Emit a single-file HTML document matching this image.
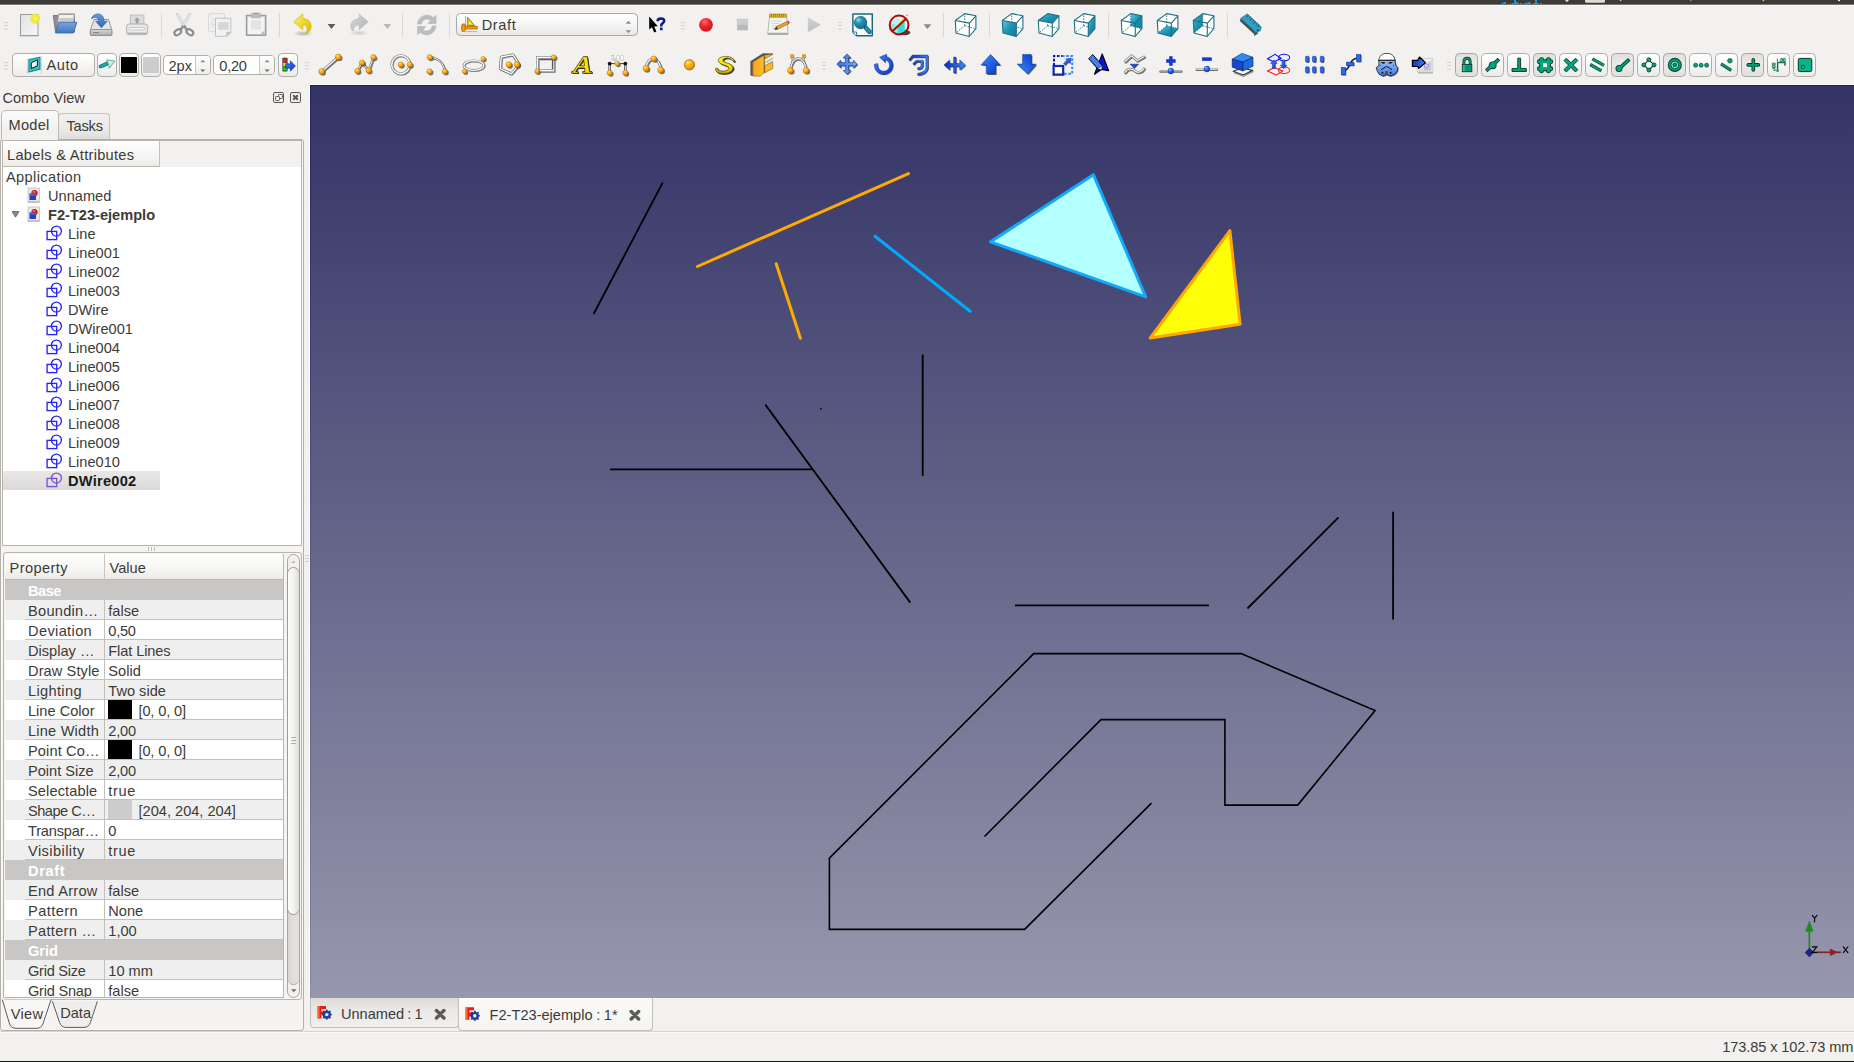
<!DOCTYPE html>
<html><head><meta charset="utf-8"><title>FreeCAD</title>
<style>
html,body{margin:0;padding:0;}
body{width:1854px;height:1062px;overflow:hidden;background:#f2f1f0;position:relative;
 font-family:"Liberation Sans",sans-serif;font-size:14.6px;color:#3c3b37;}
.abs{position:absolute;}
.t{position:absolute;white-space:nowrap;line-height:1;}
svg{position:absolute;overflow:visible;}
#topbar{left:0;top:0;width:1854px;height:4px;background:#3c3b37;}
#botline{left:0;top:1061px;width:1854px;height:1px;background:#1a1a18;}

</style></head>
<body>
<!-- toolbar1.html -->
<div class="abs" id="topbar"></div>
<div class="abs" style="left:0;top:4px;width:1854px;height:1px;background:#77766f;"></div><div class="abs" style="left:0;top:5px;width:1854px;height:1px;background:#fbfbfa;"></div>
<svg style="left:1480px;top:0" width="374" height="5" viewBox="1480 0 374 5"><g fill="#1b93dd" shape-rendering="crispEdges"><rect x="1501.6" y="3" width="4" height="1.2"/><rect x="1502.2" y="1.6" width="1.2" height="1.4"/><rect x="1504.4" y="1.6" width="1.2" height="1.4"/><rect x="1509.6" y="3" width="1.2" height="1"/><rect x="1511.8" y="3" width="7" height="1.2"/><rect x="1514" y="0" width="1.8" height="3"/><rect x="1516" y="1.8" width="1.6" height="1.2"/><rect x="1520" y="3" width="2" height="1"/><rect x="1524" y="3" width="7" height="1.2"/><rect x="1526" y="2" width="1.2" height="1"/><rect x="1528.4" y="2" width="1.2" height="1"/><rect x="1533" y="3" width="5.6" height="1.2"/><rect x="1535" y="0" width="1.6" height="3"/><rect x="1540.4" y="3" width="1.8" height="1"/></g><circle cx="1567" cy="0.2" r="1.5" fill="#e8e6e2"/><rect x="1585" y="-2" width="20" height="4.8" rx="1.6" fill="#dfdcd6"/><circle cx="1620.6" cy="0" r="0.9" fill="#e8e6e2"/><rect x="1690" y="0" width="1.4" height="1.4" fill="#8a8985"/><rect x="1762.6" y="0" width="1.6" height="1.2" fill="#f0c060"/><circle cx="1839" cy="0.2" r="1" fill="#ffffff"/></svg>
<div class="abs" style="left:4px;top:22px;width:4px;height:1px;background:#d6d4d0;box-shadow:0 3px 0 #d6d4d0,0 6.5px 0 #d6d4d0;"></div>
<div class="abs" style="left:681px;top:22px;width:4px;height:1px;background:#d6d4d0;box-shadow:0 3px 0 #d6d4d0,0 6.5px 0 #d6d4d0;"></div>
<div class="abs" style="left:838px;top:22px;width:4px;height:1px;background:#d6d4d0;box-shadow:0 3px 0 #d6d4d0,0 6.5px 0 #d6d4d0;"></div>
<div class="abs" style="left:161px;top:13px;width:1px;height:24px;background:#d9d7d3;"></div>
<div class="abs" style="left:279px;top:13px;width:1px;height:24px;background:#d9d7d3;"></div>
<div class="abs" style="left:402px;top:13px;width:1px;height:24px;background:#d9d7d3;"></div>
<div class="abs" style="left:449px;top:13px;width:1px;height:24px;background:#d9d7d3;"></div>
<div class="abs" style="left:943px;top:13px;width:1px;height:24px;background:#d9d7d3;"></div>
<div class="abs" style="left:989px;top:13px;width:1px;height:24px;background:#d9d7d3;"></div>
<div class="abs" style="left:1108px;top:13px;width:1px;height:24px;background:#d9d7d3;"></div>
<div class="abs" style="left:1227px;top:13px;width:1px;height:24px;background:#d9d7d3;"></div>
<div class="abs" style="left:456px;top:13px;width:182px;height:23px;box-sizing:border-box;border:1px solid #aba8a1;border-radius:4.5px;background:linear-gradient(#ffffff,#f6f5f4 50%,#e9e8e6);"></div>
<div class="t" style="left:481.7px;top:17.77px;font-size:14.6px;letter-spacing:0.6px;">Draft</div>
<svg style="left:0;top:0" width="1854" height="46" viewBox="0 0 1854 46"><defs>
<radialGradient id="gBall" cx="0.35" cy="0.3" r="0.75"><stop offset="0" stop-color="#ffe9a8"/><stop offset="0.25" stop-color="#ffc02e"/><stop offset="0.7" stop-color="#f59a00"/><stop offset="1" stop-color="#c87400"/></radialGradient>
<radialGradient id="gBlueBall" cx="0.35" cy="0.3" r="0.75"><stop offset="0" stop-color="#9cc4ff"/><stop offset="0.4" stop-color="#2a6cf0"/><stop offset="1" stop-color="#0a2fb0"/></radialGradient>
<radialGradient id="gRed" cx="0.4" cy="0.3" r="0.8"><stop offset="0" stop-color="#ff6a6a"/><stop offset="0.45" stop-color="#ee2028"/><stop offset="1" stop-color="#c8141c"/></radialGradient>
<radialGradient id="gYellow" cx="0.5" cy="0.5" r="0.5"><stop offset="0" stop-color="#fffde0"/><stop offset="0.25" stop-color="#f6ef3a"/><stop offset="0.8" stop-color="#eee733" stop-opacity="0.9"/><stop offset="1" stop-color="#eee733" stop-opacity="0"/></radialGradient>
<linearGradient id="gPage" x1="0" y1="0" x2="1" y2="1"><stop offset="0" stop-color="#e2e2e2"/><stop offset="1" stop-color="#f6f6f6"/></linearGradient>
<linearGradient id="gFolder" x1="0" y1="0" x2="0" y2="1"><stop offset="0" stop-color="#7aa5dc"/><stop offset="1" stop-color="#3f78c4"/></linearGradient>
<linearGradient id="gDrive" x1="0" y1="0" x2="0" y2="1"><stop offset="0" stop-color="#d8d8d8"/><stop offset="1" stop-color="#a9a9a9"/></linearGradient>
<linearGradient id="gSaveArrow" x1="0" y1="0" x2="0" y2="1"><stop offset="0" stop-color="#6a9bd8"/><stop offset="1" stop-color="#2d62b0"/></linearGradient>
<linearGradient id="gUndo" x1="0" y1="0" x2="1" y2="1"><stop offset="0" stop-color="#f8ee8a"/><stop offset="0.5" stop-color="#eed62c"/><stop offset="1" stop-color="#d8b800"/></linearGradient>
<linearGradient id="gRedo" x1="0" y1="0" x2="1" y2="1"><stop offset="0" stop-color="#d6d6d6"/><stop offset="1" stop-color="#b4b4b4"/></linearGradient>
<linearGradient id="gCube" x1="0" y1="0" x2="1" y2="1"><stop offset="0" stop-color="#62c8ea"/><stop offset="0.5" stop-color="#1b93b2"/><stop offset="1" stop-color="#0c7c98"/></linearGradient>
<linearGradient id="gBlue" x1="0" y1="0" x2="1" y2="1"><stop offset="0" stop-color="#3a8cff"/><stop offset="1" stop-color="#0a35c8"/></linearGradient>
<linearGradient id="gBlueH" x1="0" y1="0" x2="1" y2="0"><stop offset="0" stop-color="#0a2cc0"/><stop offset="1" stop-color="#3a8cff"/></linearGradient>
<linearGradient id="gBlueUp" x1="1" y1="0" x2="0" y2="1"><stop offset="0" stop-color="#0a35c8"/><stop offset="1" stop-color="#3a8cff"/></linearGradient>
<linearGradient id="gBlueL" x1="0" y1="0" x2="1" y2="0.3"><stop offset="0" stop-color="#2c66e4"/><stop offset="1" stop-color="#66a6ff"/></linearGradient>
<linearGradient id="gS" x1="0" y1="0" x2="0" y2="1"><stop offset="0" stop-color="#fff04a"/><stop offset="0.6" stop-color="#f4d800"/><stop offset="1" stop-color="#c8a800"/></linearGradient>
<linearGradient id="gBlueV" x1="0" y1="0" x2="0" y2="1"><stop offset="0" stop-color="#3a8cff"/><stop offset="1" stop-color="#0a35c8"/></linearGradient>
<linearGradient id="gOrange" x1="0" y1="0" x2="1" y2="0"><stop offset="0" stop-color="#ff9f1a"/><stop offset="1" stop-color="#ffc22e"/></linearGradient>
<linearGradient id="gHelm" x1="0" y1="0" x2="0" y2="1"><stop offset="0" stop-color="#c4dcff"/><stop offset="1" stop-color="#3d7ae0"/></linearGradient>
<linearGradient id="gGray" x1="0" y1="0" x2="0" y2="1"><stop offset="0" stop-color="#d4d4d4"/><stop offset="1" stop-color="#bcbcbc"/></linearGradient>
<radialGradient id="gMag2" cx="0.32" cy="0.28" r="0.8"><stop offset="0" stop-color="#84dcfa"/><stop offset="0.35" stop-color="#2596b6"/><stop offset="1" stop-color="#0f6884"/></radialGradient>
<radialGradient id="gShadow" cx="0.5" cy="0.5" r="0.5"><stop offset="0" stop-color="#9a9a9a" stop-opacity="0.7"/><stop offset="1" stop-color="#9a9a9a" stop-opacity="0"/></radialGradient>
<linearGradient id="gMag" x1="0" y1="0" x2="1" y2="1"><stop offset="0" stop-color="#5fc2e2"/><stop offset="1" stop-color="#1a7896"/></linearGradient>
<linearGradient id="gLock" x1="0" y1="0" x2="1" y2="0"><stop offset="0" stop-color="#7fe0c4"/><stop offset="0.4" stop-color="#00a37a"/><stop offset="1" stop-color="#00a37a"/></linearGradient>
</defs><g><rect x="19.5" y="35" width="19" height="1.5" fill="#8a8a8a" opacity="0.5"/><rect x="20.5" y="14.5" width="17.5" height="21" fill="url(#gPage)" stroke="#9c9c9c" stroke-width="1"/><circle cx="35.2" cy="18.5" r="5.6" fill="url(#gYellow)"/></g><g><path d="M53.2,15.5 L58,15.5 L59,14 L74.5,14 L74.5,32 L55.5,32 Z" fill="#8f8f8f" stroke="#6e6e6e" stroke-width="0.8"/><path d="M58.5,14.5 L74.3,14.5 L73,26 L57.5,26 Z" fill="#efefef" stroke="#9a9a9a" stroke-width="0.7"/><path d="M59.5,18 L73.6,18 L73,22 L59,22Z" fill="#c9c9c9"/><path d="M55.5,33 L58.8,22.3 L76.9,22.3 L73.4,33 Z" fill="url(#gFolder)" stroke="#3465a4" stroke-width="0.8" stroke-linejoin="round"/></g><g><path d="M90.4,30 L94,19.5 L108.5,19.5 L111.8,30 L111.8,35 L90.4,35 Z" fill="#e4e4e4" stroke="#8d8d8d" stroke-width="0.9" stroke-linejoin="round"/><rect x="90.4" y="29.5" width="21.4" height="6" rx="1" fill="url(#gDrive)" stroke="#8a8a8a" stroke-width="0.9"/><rect x="93" y="32" width="6" height="1.2" fill="#8a8a8a"/><path d="M91.6,18.8 C92.2,14.2 99.5,11.8 102.8,16.5 C103.8,18 104,19.6 104,21.3 L107.2,21.3 L101.4,27.8 L95.6,21.3 L98.8,21.3 C98.8,18 95,16.2 91.6,18.8 Z" fill="url(#gSaveArrow)" stroke="#2c5aa0" stroke-width="0.6"/></g><g><rect x="130.3" y="15" width="13.6" height="11" fill="#dcdcdc" stroke="#b4b4b4" stroke-width="0.8"/><path d="M137.1,17.2 L140.2,20.6 L138.4,20.6 L138.4,23.5 L135.8,23.5 L135.8,20.6 L134,20.6 Z" fill="#9f9f9f"/><rect x="126.6" y="24" width="21" height="10.6" rx="2.5" fill="#e9e9e9" stroke="#a8a8a8" stroke-width="0.9"/><rect x="129" y="27.5" width="16.2" height="2.4" rx="1.2" fill="#f8f8f8" stroke="#b0b0b0" stroke-width="0.6"/><rect x="127" y="32.6" width="20.2" height="2" rx="1" fill="#b4b4b4"/></g><g><path d="M176.2,13.8 L177.8,13.2 L187.2,28.6 L184.6,29.6 Z" fill="#ececec" stroke="#b9b9b9" stroke-width="0.6"/><path d="M190.8,13.8 L189.2,13.2 L179.8,28.6 L182.4,29.6 Z" fill="#ececec" stroke="#b9b9b9" stroke-width="0.6"/><ellipse cx="177.8" cy="32.2" rx="3.7" ry="2.5" transform="rotate(-35 177.8 32.2)" fill="none" stroke="#8c8c8c" stroke-width="2.1"/><ellipse cx="189.9" cy="32.2" rx="3.7" ry="2.5" transform="rotate(35 189.9 32.2)" fill="none" stroke="#8c8c8c" stroke-width="2.1"/><path d="M180.6,29.8 L183,26.4 M187,29.8 L184.6,26.4" stroke="#8c8c8c" stroke-width="2.2" stroke-linecap="round"/></g><g><rect x="208.6" y="13.6" width="16" height="18" rx="1" fill="#efefef" stroke="#d2d2d2" stroke-width="0.8"/><path d="M211,18.5h9M211,20.5h9M211,22.5h9M211,24.5h9M211,26.5h9" stroke="#dadada" stroke-width="0.6"/><path d="M215.5,18.2 L230.8,18.2 L230.8,32.5 L226.8,36.3 L215.5,36.3 Z" fill="#f1f1f1" stroke="#b7b7b7" stroke-width="0.8"/><rect x="218" y="22.2" width="10.6" height="7.6" fill="#d6d6d6"/><path d="M226.8,36.3 L226.8,32.3 L230.8,32.3 Z" fill="#c6c6c6" stroke="#b0b0b0" stroke-width="0.5"/></g><g><rect x="246.6" y="15.6" width="19" height="19.6" fill="#f3f3f3" stroke="#9c9c9c" stroke-width="1.6"/><rect x="251.2" y="13.2" width="9.4" height="4.6" rx="1" fill="#bcbcbc" stroke="#a3a3a3" stroke-width="0.6"/><rect x="253.6" y="12.8" width="4.6" height="1.6" fill="#a0a0a0"/><rect x="251" y="20.5" width="10" height="9" fill="#e4e4e4"/><path d="M264.4,30.4 L264.4,34 L260.6,34 Z" fill="#b5b5b5"/></g><g><ellipse cx="303" cy="33.6" rx="10" ry="3" fill="url(#gShadow)"/><path d="M293.8,21.8 L302.8,14 L302.8,18.6 C308.5,18.6 311.4,22.5 311.2,26.6 C311,30.4 308.6,33 305.2,34.2 C307.4,31.6 307.8,28.4 306.4,26.6 C305.4,25.4 304.2,25 302.8,25 L302.8,29.8 Z" fill="url(#gUndo)" stroke="#d4b800" stroke-width="0.7" stroke-linejoin="round"/></g><polygon points="327.6,24 335.4,24 331.5,29" fill="#5c5b58"/><g><ellipse cx="359" cy="33" rx="10" ry="3" fill="url(#gShadow)" opacity="0.6"/><path d="M368.2,21.8 L359.2,14 L359.2,18.6 C353.5,18.6 350.6,22.5 350.8,26.6 C351,29 352,30.6 353.4,31.2 C353.4,28.6 354.2,26.8 355.6,25.8 C356.6,25.2 357.8,25 359.2,25 L359.2,29.8 Z" fill="url(#gRedo)" stroke="#bdbdbd" stroke-width="0.7" stroke-linejoin="round"/></g><polygon points="383.5,24 391.3,24 387.4,29" fill="#b9b7b4"/><g fill="#bdbdbd" stroke="#a9a9a9" stroke-width="0.5"><path d="M417.6,24 C418,18 423,15 427.5,15.2 C430,15.4 432,16.4 433.4,17.8 L436,15.4 L436,23.4 L428,23.4 L430.6,20.6 C429.6,19.6 428.4,19 427,19 C424,19 421.8,21.2 421.4,24 Z"/><path d="M436,26 C435.6,32 430.6,35 426.1,34.8 C423.6,34.6 421.6,33.6 420.2,32.2 L417.6,34.6 L417.6,26.6 L425.6,26.6 L423,29.4 C424,30.4 425.2,31 426.6,31 C429.6,31 431.8,28.8 432.2,26 Z"/></g><g><path d="M465.6,16 L465.6,29" stroke="#9a9a9a" stroke-width="0.8"/><path d="M467.6,17.2 L467.6,25.6 L474.6,25.6 Z" fill="#e8d21e" stroke="#6b5d00" stroke-width="0.7"/><path d="M469,21.5 L469,24.3 L471.4,24.3 Z" fill="#f2f1f0"/><rect x="462" y="26.2" width="15.2" height="2.8" fill="#f59a0a" stroke="#8a5200" stroke-width="0.6"/><rect x="461.8" y="24" width="3.4" height="7.4" rx="0.8" fill="#f59a0a" stroke="#8a5200" stroke-width="0.6"/><path d="M465.5,31.6 H477.5" stroke="#9a9a9a" stroke-width="0.7"/></g><polygon points="625.6,23.8 631.2,23.8 628.4,20.8" fill="#8e8c88"/><polygon points="625.6,30.2 631.2,30.2 628.4,33.2" fill="#8e8c88"/><g><path d="M649.2,16.6 L649.2,29.6 L652,27.2 L654.2,32.6 L656.4,31.6 L654.2,26.4 L657.8,26.2 Z" fill="#000"/><path d="M657.6,21.2 C657.6,19 659.2,18.4 661,18.4 C662.9,18.4 664.2,19.2 664.2,20.8 C664.2,22.4 663.2,22.8 662.2,23.6 C661.4,24.2 661.2,24.8 661.2,26.4" fill="none" stroke="#12128c" stroke-width="2.5"/><rect x="659.9" y="27.6" width="2.7" height="2.6" fill="#12128c"/></g><circle cx="706" cy="24.8" r="6.9" fill="url(#gRed)"/><rect x="737.3" y="19.2" width="10.4" height="10.8" fill="url(#gGray)" stroke="#bdbdbd" stroke-width="0.7"/><rect x="738" y="25" width="9" height="4.4" fill="#b2b2b2" opacity="0.6"/><g><rect x="767.6" y="33" width="20.6" height="1.8" fill="#9a9a9a"/><path d="M769.6,15.4 L786.6,15.4 L788,33.2 L767.8,33.2 Z" fill="#f4f4f2" stroke="#a8a8a8" stroke-width="0.8"/><rect x="769.8" y="14" width="16.6" height="3.2" fill="#d9b52a" stroke="#9c7d10" stroke-width="0.6"/><path d="M771.5,14v3M773.5,14v3M775.5,14v3M777.5,14v3M779.5,14v3M781.5,14v3M783.5,14v3" stroke="#8a6d08" stroke-width="0.5"/><path d="M771.6,21h10M771.6,23.5h8M771.6,26h6M771.6,28.5h5" stroke="#cfcfcf" stroke-width="0.8"/><path d="M774.6,29.4 L776.4,26.6 L787.2,21.4 L788.6,23.8 L777.8,29.2 Z" fill="#e9a52a" stroke="#8a5a0a" stroke-width="0.6"/><path d="M787.2,21.4 L788.6,20.8 L790,22.8 L788.6,23.8 Z" fill="#e03a3a"/><path d="M774.6,29.4 L776.4,26.6 L777.8,29.2 Z" fill="#3a2a10"/></g><polygon points="808.3,18 820.2,24.8 808.3,31.6" fill="url(#gGray)" stroke="#c3c3c3" stroke-width="0.7"/><g><path d="M852.9,14 L872.3,14 L872.3,35.8 L856.6,35.8 L852.9,32 Z" fill="#fff" stroke="#1d6878" stroke-width="1.5" stroke-linejoin="round"/><path d="M852.9,32 L856.6,32 L856.6,35.8" fill="#fff" stroke="#1d6878" stroke-width="0.9"/><path d="M866,28 L869.4,31.8" stroke="#0f5a70" stroke-width="4.6" stroke-linecap="round"/><path d="M866,28 L869.4,31.8" stroke="#2290b0" stroke-width="2.8" stroke-linecap="round"/><circle cx="860.6" cy="22.6" r="6.2" fill="url(#gMag2)" stroke="#0e5f78" stroke-width="0.8"/></g><g><ellipse cx="904.5" cy="32.6" rx="5.8" ry="2.6" fill="#2c2c2c" opacity="0.9"/><path d="M889.4,23.4 L896.6,19 L904.8,21.8 L904.8,31.4 L898,34.2 L889.4,31 Z" fill="#30dcdc"/><path d="M889.4,23.4 L896.6,19 L904.8,21.8 L898,25.6 Z" fill="#b8f2f2"/><path d="M889.4,23.4 L898,25.6 L898,34.2 L889.4,31 Z" fill="#8eeaea"/><path d="M898.6,24.2 L904.9,17.9" stroke="#f0e020" stroke-width="1.7"/><circle cx="907.2" cy="15.3" r="0.9" fill="#e8a020"/><circle cx="899.1" cy="25" r="9.4" fill="none" stroke="#b00808" stroke-width="2"/><path d="M892,31.4 L906.2,18.8" stroke="#b00808" stroke-width="2"/></g><polygon points="923.5,24.2 931.3,24.2 927.4,29" fill="#8c8a86"/><g stroke-linejoin="round"><polygon points="955.3,20.5 964.7,13.6 975.9,15.8 975.9,28.7 969.2,36.5 956.0,33.0" fill="#ffffff" stroke="none"/><line x1="964.7" y1="25.7" x2="964.7" y2="13.6" stroke="#1f6f82" stroke-width="0.9" stroke-dasharray="1.6,1.3"/><line x1="964.7" y1="25.7" x2="975.9" y2="28.7" stroke="#1f6f82" stroke-width="0.9" stroke-dasharray="1.6,1.3"/><line x1="964.7" y1="25.7" x2="956.0" y2="33.0" stroke="#1f6f82" stroke-width="0.9" stroke-dasharray="1.6,1.3"/><polygon points="955.3,20.5 964.7,13.6 975.9,15.8 975.9,28.7 969.2,36.5 956.0,33.0" fill="none" stroke="#1f6f82" stroke-width="1.1" fill="none"/><polyline points="955.3,20.5 969.4,23.1 969.2,36.5" stroke="#1f6f82" stroke-width="1.1" fill="none"/><line x1="969.4" y1="23.1" x2="975.9" y2="15.8" stroke="#1f6f82" stroke-width="1.1" fill="none"/></g><g stroke-linejoin="round"><polygon points="1002.3,20.5 1011.7,13.6 1022.9,15.8 1022.9,28.7 1016.2,36.5 1003.0,33.0" fill="#ffffff" stroke="none"/><line x1="1011.7" y1="25.7" x2="1011.7" y2="13.6" stroke="#1f6f82" stroke-width="0.9" stroke-dasharray="1.6,1.3"/><line x1="1011.7" y1="25.7" x2="1022.9" y2="28.7" stroke="#1f6f82" stroke-width="0.9" stroke-dasharray="1.6,1.3"/><line x1="1011.7" y1="25.7" x2="1003.0" y2="33.0" stroke="#1f6f82" stroke-width="0.9" stroke-dasharray="1.6,1.3"/><polygon points="1002.3,20.5 1016.4,23.1 1016.2,36.5 1003.0,33.0" fill="url(#gCube)" stroke="none"/><polygon points="1002.3,20.5 1011.7,13.6 1022.9,15.8 1022.9,28.7 1016.2,36.5 1003.0,33.0" fill="none" stroke="#1f6f82" stroke-width="1.1" fill="none"/><polyline points="1002.3,20.5 1016.4,23.1 1016.2,36.5" stroke="#1f6f82" stroke-width="1.1" fill="none"/><line x1="1016.4" y1="23.1" x2="1022.9" y2="15.8" stroke="#1f6f82" stroke-width="1.1" fill="none"/></g><g stroke-linejoin="round"><polygon points="1038.3,20.5 1047.7,13.6 1058.9,15.8 1058.9,28.7 1052.2,36.5 1039.0,33.0" fill="#ffffff" stroke="none"/><line x1="1047.7" y1="25.7" x2="1047.7" y2="13.6" stroke="#1f6f82" stroke-width="0.9" stroke-dasharray="1.6,1.3"/><line x1="1047.7" y1="25.7" x2="1058.9" y2="28.7" stroke="#1f6f82" stroke-width="0.9" stroke-dasharray="1.6,1.3"/><line x1="1047.7" y1="25.7" x2="1039.0" y2="33.0" stroke="#1f6f82" stroke-width="0.9" stroke-dasharray="1.6,1.3"/><polygon points="1038.3,20.5 1052.4,23.1 1058.9,15.8 1047.7,13.6" fill="url(#gCube)" stroke="none"/><polygon points="1038.3,20.5 1047.7,13.6 1058.9,15.8 1058.9,28.7 1052.2,36.5 1039.0,33.0" fill="none" stroke="#1f6f82" stroke-width="1.1" fill="none"/><polyline points="1038.3,20.5 1052.4,23.1 1052.2,36.5" stroke="#1f6f82" stroke-width="1.1" fill="none"/><line x1="1052.4" y1="23.1" x2="1058.9" y2="15.8" stroke="#1f6f82" stroke-width="1.1" fill="none"/></g><g stroke-linejoin="round"><polygon points="1074.3,20.5 1083.7,13.6 1094.9,15.8 1094.9,28.7 1088.2,36.5 1075.0,33.0" fill="#ffffff" stroke="none"/><line x1="1083.7" y1="25.7" x2="1083.7" y2="13.6" stroke="#1f6f82" stroke-width="0.9" stroke-dasharray="1.6,1.3"/><line x1="1083.7" y1="25.7" x2="1094.9" y2="28.7" stroke="#1f6f82" stroke-width="0.9" stroke-dasharray="1.6,1.3"/><line x1="1083.7" y1="25.7" x2="1075.0" y2="33.0" stroke="#1f6f82" stroke-width="0.9" stroke-dasharray="1.6,1.3"/><polygon points="1088.4,23.1 1094.9,15.8 1094.9,28.7 1088.2,36.5" fill="url(#gCube)" stroke="none"/><polygon points="1074.3,20.5 1083.7,13.6 1094.9,15.8 1094.9,28.7 1088.2,36.5 1075.0,33.0" fill="none" stroke="#1f6f82" stroke-width="1.1" fill="none"/><polyline points="1074.3,20.5 1088.4,23.1 1088.2,36.5" stroke="#1f6f82" stroke-width="1.1" fill="none"/><line x1="1088.4" y1="23.1" x2="1094.9" y2="15.8" stroke="#1f6f82" stroke-width="1.1" fill="none"/></g><g stroke-linejoin="round"><polygon points="1121.3,20.5 1130.7,13.6 1141.9,15.8 1141.9,28.7 1135.2,36.5 1122.0,33.0" fill="#ffffff" stroke="none"/><polygon points="1130.7,13.6 1141.9,15.8 1141.9,28.7 1130.7,25.7" fill="url(#gCube)" stroke="none"/><line x1="1130.7" y1="25.7" x2="1130.7" y2="13.6" stroke="#1f6f82" stroke-width="0.9" stroke-dasharray="1.6,1.3"/><line x1="1130.7" y1="25.7" x2="1141.9" y2="28.7" stroke="#1f6f82" stroke-width="0.9" stroke-dasharray="1.6,1.3"/><line x1="1130.7" y1="25.7" x2="1122.0" y2="33.0" stroke="#1f6f82" stroke-width="0.9" stroke-dasharray="1.6,1.3"/><polygon points="1121.3,20.5 1130.7,13.6 1141.9,15.8 1141.9,28.7 1135.2,36.5 1122.0,33.0" fill="none" stroke="#1f6f82" stroke-width="1.1" fill="none"/><polyline points="1121.3,20.5 1135.4,23.1 1135.2,36.5" stroke="#1f6f82" stroke-width="1.1" fill="none"/><line x1="1135.4" y1="23.1" x2="1141.9" y2="15.8" stroke="#1f6f82" stroke-width="1.1" fill="none"/></g><g stroke-linejoin="round"><polygon points="1157.3,20.5 1166.7,13.6 1177.9,15.8 1177.9,28.7 1171.2,36.5 1158.0,33.0" fill="#ffffff" stroke="none"/><polygon points="1158.0,33.0 1171.2,36.5 1177.9,28.7 1166.7,25.7" fill="url(#gCube)" stroke="none"/><line x1="1166.7" y1="25.7" x2="1166.7" y2="13.6" stroke="#1f6f82" stroke-width="0.9" stroke-dasharray="1.6,1.3"/><line x1="1166.7" y1="25.7" x2="1177.9" y2="28.7" stroke="#1f6f82" stroke-width="0.9" stroke-dasharray="1.6,1.3"/><line x1="1166.7" y1="25.7" x2="1158.0" y2="33.0" stroke="#1f6f82" stroke-width="0.9" stroke-dasharray="1.6,1.3"/><polygon points="1157.3,20.5 1166.7,13.6 1177.9,15.8 1177.9,28.7 1171.2,36.5 1158.0,33.0" fill="none" stroke="#1f6f82" stroke-width="1.1" fill="none"/><polyline points="1157.3,20.5 1171.4,23.1 1171.2,36.5" stroke="#1f6f82" stroke-width="1.1" fill="none"/><line x1="1171.4" y1="23.1" x2="1177.9" y2="15.8" stroke="#1f6f82" stroke-width="1.1" fill="none"/></g><g stroke-linejoin="round"><polygon points="1193.3,20.5 1202.7,13.6 1213.9,15.8 1213.9,28.7 1207.2,36.5 1194.0,33.0" fill="#ffffff" stroke="none"/><polygon points="1193.3,20.5 1202.7,13.6 1202.7,25.7 1194.0,33.0" fill="url(#gCube)" stroke="none"/><line x1="1202.7" y1="25.7" x2="1202.7" y2="13.6" stroke="#1f6f82" stroke-width="0.9" stroke-dasharray="1.6,1.3"/><line x1="1202.7" y1="25.7" x2="1213.9" y2="28.7" stroke="#1f6f82" stroke-width="0.9" stroke-dasharray="1.6,1.3"/><line x1="1202.7" y1="25.7" x2="1194.0" y2="33.0" stroke="#1f6f82" stroke-width="0.9" stroke-dasharray="1.6,1.3"/><polygon points="1193.3,20.5 1202.7,13.6 1213.9,15.8 1213.9,28.7 1207.2,36.5 1194.0,33.0" fill="none" stroke="#1f6f82" stroke-width="1.1" fill="none"/><polyline points="1193.3,20.5 1207.4,23.1 1207.2,36.5" stroke="#1f6f82" stroke-width="1.1" fill="none"/><line x1="1207.4" y1="23.1" x2="1213.9" y2="15.8" stroke="#1f6f82" stroke-width="1.1" fill="none"/></g><g><path d="M1239.8,21 L1241,18.2 L1255.4,31.4 L1258.6,33 L1254.4,36 L1254,34 Z" fill="#4d4d4d"/><path d="M1240.7,18.4 L1247.2,13.9 L1261.2,26.8 L1260.4,30.6 L1255.2,33 L1254.2,30.6 Z" fill="#2da0c6" stroke="#1a6a88" stroke-width="0.7" stroke-linejoin="round"/><path d="M1248.6,15.2l-2.2,1.6M1250.4,16.9l-1.4,1M1252.2,18.5l-2.2,1.6M1254,20.2l-1.4,1M1255.8,21.8l-2.2,1.6M1257.6,23.5l-1.4,1M1259.4,25.1l-2.2,1.6" stroke="#0e3848" stroke-width="0.8"/><circle cx="1257.8" cy="30.2" r="0.9" fill="#0e3848"/></g></svg>
<!-- toolbar2.html -->
<div class="abs" style="left:4px;top:62px;width:4px;height:1px;background:#d6d4d0;box-shadow:0 3px 0 #d6d4d0,0 6.5px 0 #d6d4d0;"></div>
<div class="abs" style="left:305px;top:62px;width:4px;height:1px;background:#d6d4d0;box-shadow:0 3px 0 #d6d4d0,0 6.5px 0 #d6d4d0;"></div>
<div class="abs" style="left:822px;top:62px;width:4px;height:1px;background:#d6d4d0;box-shadow:0 3px 0 #d6d4d0,0 6.5px 0 #d6d4d0;"></div>
<div class="abs" style="left:1447px;top:62px;width:4px;height:1px;background:#d6d4d0;box-shadow:0 3px 0 #d6d4d0,0 6.5px 0 #d6d4d0;"></div>
<div class="abs" style="left:12px;top:53px;width:83px;height:24px;box-sizing:border-box;border:1px solid #b1aea7;border-radius:4px;background:linear-gradient(#ffffff,#f7f6f5 50%,#ecebe9);"></div>
<div class="abs" style="left:97px;top:53px;width:20px;height:24px;box-sizing:border-box;border:1px solid #b1aea7;border-radius:4px;background:linear-gradient(#ffffff,#f7f6f5 50%,#ecebe9);"></div>
<div class="abs" style="left:119px;top:53px;width:20px;height:24px;box-sizing:border-box;border:1px solid #b1aea7;border-radius:4px;background:linear-gradient(#ffffff,#f7f6f5 50%,#ecebe9);"></div>
<div class="abs" style="left:141px;top:53px;width:20px;height:24px;box-sizing:border-box;border:1px solid #b1aea7;border-radius:4px;background:linear-gradient(#ffffff,#f7f6f5 50%,#ecebe9);"></div>
<div class="abs" style="left:121px;top:57px;width:16px;height:16px;background:#000;"></div>
<div class="abs" style="left:143px;top:57px;width:16px;height:16px;background:#cccccc;"></div>
<div class="abs" style="left:163px;top:55px;width:48px;height:20px;box-sizing:border-box;border:1px solid #b1aea7;border-radius:4px;background:#fff;overflow:hidden;"><div class="abs" style="left:30.5px;top:0;width:16.5px;height:18px;border-left:1px solid #c9c6c0;background:linear-gradient(#fdfdfd,#efeeec);"></div></div><div class="t" style="left:168.5px;top:58.77px;font-size:14.6px;letter-spacing:-0.05px;">2px</div><svg style="left:0;top:0" width="1" height="1"><polygon points="200.15,62.2 205.35,62.2 202.75,59.8" fill="#8e8c88"/><polygon points="200.15,69.4 205.35,69.4 202.75,72" fill="#6e6c68"/></svg>
<div class="abs" style="left:213px;top:55px;width:62px;height:20px;box-sizing:border-box;border:1px solid #b1aea7;border-radius:4px;background:#fff;overflow:hidden;"><div class="abs" style="left:45.3px;top:0;width:15.7px;height:18px;border-left:1px solid #c9c6c0;background:linear-gradient(#fdfdfd,#efeeec);"></div></div><div class="t" style="left:219.3px;top:58.77px;font-size:14.6px;letter-spacing:-0.25px;">0,20</div><svg style="left:0;top:0" width="1" height="1"><polygon points="264.55,62.2 269.75,62.2 267.15,59.8" fill="#8e8c88"/><polygon points="264.55,69.4 269.75,69.4 267.15,72" fill="#6e6c68"/></svg>
<div class="abs" style="left:278px;top:53px;width:20px;height:24px;box-sizing:border-box;border:1px solid #b1aea7;border-radius:4px;background:linear-gradient(#ffffff,#f7f6f5 50%,#ecebe9);"></div>
<div class="t" style="left:46.6px;top:57.57px;font-size:14.6px;letter-spacing:0.5px;">Auto</div>
<div class="abs" style="left:1455px;top:53px;width:23px;height:24px;box-sizing:border-box;border:1px solid #a9a69f;border-radius:4.5px;background:linear-gradient(#e1dfdc,#ebeae8 45%,#e2e0dd);"></div>
<div class="abs" style="left:1481px;top:53px;width:23px;height:24px;box-sizing:border-box;border:1px solid #b1aea7;border-radius:4.5px;background:linear-gradient(#ffffff,#f7f6f5 50%,#ecebe9);"></div>
<div class="abs" style="left:1507px;top:53px;width:23px;height:24px;box-sizing:border-box;border:1px solid #b1aea7;border-radius:4.5px;background:linear-gradient(#ffffff,#f7f6f5 50%,#ecebe9);"></div>
<div class="abs" style="left:1533px;top:53px;width:23px;height:24px;box-sizing:border-box;border:1px solid #a9a69f;border-radius:4.5px;background:linear-gradient(#e1dfdc,#ebeae8 45%,#e2e0dd);"></div>
<div class="abs" style="left:1559px;top:53px;width:23px;height:24px;box-sizing:border-box;border:1px solid #b1aea7;border-radius:4.5px;background:linear-gradient(#ffffff,#f7f6f5 50%,#ecebe9);"></div>
<div class="abs" style="left:1585px;top:53px;width:23px;height:24px;box-sizing:border-box;border:1px solid #b1aea7;border-radius:4.5px;background:linear-gradient(#ffffff,#f7f6f5 50%,#ecebe9);"></div>
<div class="abs" style="left:1611px;top:53px;width:23px;height:24px;box-sizing:border-box;border:1px solid #a9a69f;border-radius:4.5px;background:linear-gradient(#e1dfdc,#ebeae8 45%,#e2e0dd);"></div>
<div class="abs" style="left:1637px;top:53px;width:23px;height:24px;box-sizing:border-box;border:1px solid #b1aea7;border-radius:4.5px;background:linear-gradient(#ffffff,#f7f6f5 50%,#ecebe9);"></div>
<div class="abs" style="left:1663px;top:53px;width:23px;height:24px;box-sizing:border-box;border:1px solid #a9a69f;border-radius:4.5px;background:linear-gradient(#e1dfdc,#ebeae8 45%,#e2e0dd);"></div>
<div class="abs" style="left:1689px;top:53px;width:23px;height:24px;box-sizing:border-box;border:1px solid #b1aea7;border-radius:4.5px;background:linear-gradient(#ffffff,#f7f6f5 50%,#ecebe9);"></div>
<div class="abs" style="left:1715px;top:53px;width:23px;height:24px;box-sizing:border-box;border:1px solid #b1aea7;border-radius:4.5px;background:linear-gradient(#ffffff,#f7f6f5 50%,#ecebe9);"></div>
<div class="abs" style="left:1741px;top:53px;width:23px;height:24px;box-sizing:border-box;border:1px solid #a9a69f;border-radius:4.5px;background:linear-gradient(#e1dfdc,#ebeae8 45%,#e2e0dd);"></div>
<div class="abs" style="left:1767px;top:53px;width:23px;height:24px;box-sizing:border-box;border:1px solid #b1aea7;border-radius:4.5px;background:linear-gradient(#ffffff,#f7f6f5 50%,#ecebe9);"></div>
<div class="abs" style="left:1793px;top:53px;width:23px;height:24px;box-sizing:border-box;border:1px solid #b1aea7;border-radius:4.5px;background:linear-gradient(#ffffff,#f7f6f5 50%,#ecebe9);"></div>
<svg style="left:0;top:46px" width="1854" height="40" viewBox="0 46 1854 40"><g><path d="M28.9,59.6 L40,57.2 L40,69.2 L28.9,72 Z" fill="#2ec4c8" stroke="#127a80" stroke-width="0.9"/><path d="M31.3,62.8 L37.4,59.9 L37.4,65.8 L31.3,68.6 Z" fill="#f4f4f4" stroke="#0a1a1a" stroke-width="1"/><path d="M27.6,58.6 L27.6,73.4 M41.2,56.4 L41.2,73.6 M26.8,60 L42.4,56.6 M26.8,72.6 L42.4,68.8" stroke="#2a9aa0" stroke-width="0.5" opacity="0.55"/></g><g><path d="M100.6,66.4 L107.4,63.4" stroke="#0a6a64" stroke-width="3.8" stroke-linecap="round"/><path d="M100.6,66.4 L107.4,63.4" stroke="#14b4a8" stroke-width="2.2" stroke-linecap="round"/><path d="M106.6,59.8 L114.8,61 L109.4,68.2 L108.6,64.8 Z" fill="#c4f0e8" stroke="#3a8a80" stroke-width="0.7" stroke-linejoin="round"/></g><g><rect x="282.4" y="57.8" width="5.2" height="13.8" rx="0.8" fill="#3a3a3a"/><rect x="283.2" y="58.6" width="3.6" height="3.4" fill="#f01818"/><rect x="283.2" y="62.8" width="3.6" height="3.6" fill="#f0e018"/><rect x="283.2" y="67.2" width="3.6" height="3.4" fill="#18d818"/><path d="M285.6,63.8 L290.4,63.8 L290.4,60.8 L295.4,66 L290.4,71.2 L290.4,68.2 L285.6,68.2 Z" fill="url(#gBlue)" stroke="#0a2a90" stroke-width="0.6" stroke-linejoin="round"/></g><g><path d="M321.7,71.4 L338.2,57" fill="none" stroke="#555" stroke-width="2.6" stroke-linecap="round" stroke-linejoin="round" opacity="0.8" transform="translate(0.9,0.9)"/><path d="M321.7,71.4 L338.2,57" fill="none" stroke="#7b7b7b" stroke-width="2.6" stroke-linecap="round" stroke-linejoin="round"/><path d="M321.7,71.4 L338.2,57" fill="none" stroke="#fbfbfb" stroke-width="1.3" stroke-linecap="round" stroke-linejoin="round"/><circle cx="323" cy="72.7" r="3" fill="#4a4a4a" opacity="0.75"/><circle cx="321.7" cy="71.4" r="3" fill="url(#gBall)" stroke="#a96800" stroke-width="0.4"/><circle cx="339.5" cy="58.3" r="3" fill="#4a4a4a" opacity="0.75"/><circle cx="338.2" cy="57" r="3" fill="url(#gBall)" stroke="#a96800" stroke-width="0.4"/></g><g><path d="M357.4,70.9 L362,62.6 L368.6,70.4 L373.4,57.3" fill="none" stroke="#555" stroke-width="2.2" stroke-linecap="round" stroke-linejoin="round" opacity="0.8" transform="translate(0.9,0.9)"/><path d="M357.4,70.9 L362,62.6 L368.6,70.4 L373.4,57.3" fill="none" stroke="#7b7b7b" stroke-width="2.2" stroke-linecap="round" stroke-linejoin="round"/><path d="M357.4,70.9 L362,62.6 L368.6,70.4 L373.4,57.3" fill="none" stroke="#fbfbfb" stroke-width="0.9" stroke-linecap="round" stroke-linejoin="round"/><circle cx="358.7" cy="72.2" r="2.7" fill="#4a4a4a" opacity="0.75"/><circle cx="357.4" cy="70.9" r="2.7" fill="url(#gBall)" stroke="#a96800" stroke-width="0.4"/><circle cx="363.3" cy="63.9" r="2.7" fill="#4a4a4a" opacity="0.75"/><circle cx="362" cy="62.6" r="2.7" fill="url(#gBall)" stroke="#a96800" stroke-width="0.4"/><circle cx="369.9" cy="71.7" r="2.7" fill="#4a4a4a" opacity="0.75"/><circle cx="368.6" cy="70.4" r="2.7" fill="url(#gBall)" stroke="#a96800" stroke-width="0.4"/><circle cx="374.7" cy="58.6" r="2.7" fill="#4a4a4a" opacity="0.75"/><circle cx="373.4" cy="57.3" r="2.7" fill="url(#gBall)" stroke="#a96800" stroke-width="0.4"/></g><g><circle cx="401.5" cy="65.3" r="9.1" fill="none" stroke="#555" stroke-width="2.6" opacity="0.7"/><circle cx="400.8" cy="64.6" r="9.1" fill="none" stroke="#7b7b7b" stroke-width="2.6"/><circle cx="400.8" cy="64.6" r="9.1" fill="none" stroke="#fbfbfb" stroke-width="1.4"/><circle cx="402" cy="65.9" r="2.7" fill="#4a4a4a" opacity="0.75"/><circle cx="400.7" cy="64.6" r="2.7" fill="url(#gBall)" stroke="#a96800" stroke-width="0.4"/><circle cx="411.1" cy="65.9" r="2.7" fill="#4a4a4a" opacity="0.75"/><circle cx="409.8" cy="64.6" r="2.7" fill="url(#gBall)" stroke="#a96800" stroke-width="0.4"/></g><g><path d="M429.8,57.3 C438,57.6 443.6,63 444.8,71.4" fill="none" stroke="#555" stroke-width="2.2" stroke-linecap="round" stroke-linejoin="round" opacity="0.8" transform="translate(0.9,0.9)"/><path d="M429.8,57.3 C438,57.6 443.6,63 444.8,71.4" fill="none" stroke="#7b7b7b" stroke-width="2.2" stroke-linecap="round" stroke-linejoin="round"/><path d="M429.8,57.3 C438,57.6 443.6,63 444.8,71.4" fill="none" stroke="#fbfbfb" stroke-width="0.9" stroke-linecap="round" stroke-linejoin="round"/><circle cx="431.1" cy="58.6" r="2.7" fill="#4a4a4a" opacity="0.75"/><circle cx="429.8" cy="57.3" r="2.7" fill="url(#gBall)" stroke="#a96800" stroke-width="0.4"/><circle cx="430.8" cy="72.7" r="2.7" fill="#4a4a4a" opacity="0.75"/><circle cx="429.5" cy="71.4" r="2.7" fill="url(#gBall)" stroke="#a96800" stroke-width="0.4"/><circle cx="446.1" cy="72.7" r="2.7" fill="#4a4a4a" opacity="0.75"/><circle cx="444.8" cy="71.4" r="2.7" fill="url(#gBall)" stroke="#a96800" stroke-width="0.4"/></g><g><ellipse cx="474.5" cy="66.1" rx="10" ry="4.8" fill="none" stroke="#555" stroke-width="2.4" opacity="0.7"/><ellipse cx="473.8" cy="65.5" rx="10" ry="4.8" fill="none" stroke="#7b7b7b" stroke-width="2.4"/><ellipse cx="473.8" cy="65.5" rx="10" ry="4.8" fill="none" stroke="#fbfbfb" stroke-width="1.2"/><circle cx="484.5" cy="60" r="2.3" fill="#4a4a4a" opacity="0.75"/><circle cx="483.2" cy="58.7" r="2.3" fill="url(#gBall)" stroke="#a96800" stroke-width="0.4"/><circle cx="465.9" cy="72.7" r="2.3" fill="#4a4a4a" opacity="0.75"/><circle cx="464.6" cy="71.4" r="2.3" fill="url(#gBall)" stroke="#a96800" stroke-width="0.4"/></g><g><path d="M501.2,57 L512.9,54.7 L519.2,64.6 L511.4,73.8 L500.5,68.9 Z" fill="none" stroke="#444" stroke-width="2.6" stroke-linejoin="round" opacity="0.5" transform="translate(0.7,0.7)"/><path d="M501.2,57 L512.9,54.7 L519.2,64.6 L511.4,73.8 L500.5,68.9 Z" fill="none" stroke="#4c4c4c" stroke-width="2.6" stroke-linejoin="round"/><path d="M501.2,57 L512.9,54.7 L519.2,64.6 L511.4,73.8 L500.5,68.9 Z" fill="none" stroke="#fbfbfb" stroke-width="1.5" stroke-linejoin="round"/><circle cx="510.1" cy="65.9" r="2.8" fill="#4a4a4a" opacity="0.75"/><circle cx="508.8" cy="64.6" r="2.8" fill="url(#gBall)" stroke="#a96800" stroke-width="0.4"/><circle cx="518.3" cy="65.9" r="2.8" fill="#4a4a4a" opacity="0.75"/><circle cx="517" cy="64.6" r="2.8" fill="url(#gBall)" stroke="#a96800" stroke-width="0.4"/></g><g><rect x="538.2" y="58.2" width="16" height="13.2" fill="none" stroke="#555" stroke-width="2.8" opacity="0.8"/><rect x="537.4" y="57.4" width="16" height="13.2" fill="none" stroke="#8a8a8a" stroke-width="2.8"/><rect x="537.4" y="57.4" width="16" height="13.2" fill="none" stroke="#fbfbfb" stroke-width="1.4"/><path d="M539.6,59.6 h13 v10" fill="none" stroke="#5a5a5a" stroke-width="1.4"/><circle cx="555" cy="58.6" r="2.5" fill="#4a4a4a" opacity="0.75"/><circle cx="553.7" cy="57.3" r="2.5" fill="url(#gBall)" stroke="#a96800" stroke-width="0.4"/><circle cx="538.5" cy="72.5" r="2.5" fill="#4a4a4a" opacity="0.75"/><circle cx="537.2" cy="71.2" r="2.5" fill="url(#gBall)" stroke="#a96800" stroke-width="0.4"/></g><g transform="translate(0.9,0.9)" fill="#3a3a3a"><path d="M583.4,56.6 L587.4,56.6 L589.4,71.4 L592,71.6 L592,73.2 L582.6,73.2 L582.6,71.6 L585,71.4 L584.6,68 L578,68 L575.8,71.4 L578.2,71.6 L578.2,73.2 L571.6,73.2 L571.6,71.6 L573.4,71.4 Z M579.4,65.8 L584.4,65.8 L583.6,59.6 Z" fill-rule="evenodd"/></g><path d="M583.4,56.6 L587.4,56.6 L589.4,71.4 L592,71.6 L592,73.2 L582.6,73.2 L582.6,71.6 L585,71.4 L584.6,68 L578,68 L575.8,71.4 L578.2,71.6 L578.2,73.2 L571.6,73.2 L571.6,71.6 L573.4,71.4 Z M579.4,65.8 L584.4,65.8 L583.6,59.6 Z" fill="#ffe000" stroke="#1a1a00" stroke-width="0.7" fill-rule="evenodd" stroke-linejoin="round"/><g><path d="M609.7,63.6 V72.8 M625.3,63.6 V72.8" stroke="#555" stroke-width="2.6"/><path d="M609.7,63.6 V72.8 M625.3,63.6 V72.8" stroke="#e8e8e8" stroke-width="1"/><path d="M609.7,63.6 H625.3" stroke="#444" stroke-width="1"/><circle cx="609.7" cy="63.6" r="1.9" fill="#111"/><circle cx="625.3" cy="63.6" r="1.9" fill="#111"/><circle cx="618.5" cy="64.9" r="2.4" fill="#4a4a4a" opacity="0.75"/><circle cx="617.2" cy="63.6" r="2.4" fill="url(#gBall)" stroke="#a96800" stroke-width="0.4"/><circle cx="611" cy="74.1" r="2.6" fill="#4a4a4a" opacity="0.75"/><circle cx="609.7" cy="72.8" r="2.6" fill="url(#gBall)" stroke="#a96800" stroke-width="0.4"/><circle cx="626.6" cy="74.1" r="2.6" fill="#4a4a4a" opacity="0.75"/><circle cx="625.3" cy="72.8" r="2.6" fill="url(#gBall)" stroke="#a96800" stroke-width="0.4"/><g fill="#fdfdfd" stroke="#a9a9a9" stroke-width="0.5"><rect x="612" y="55.4" width="1.6" height="5"/><rect x="614.6" y="58.8" width="1.2" height="1.6"/><rect x="616.6" y="55.4" width="3" height="5" rx="1.2"/><rect x="620.6" y="55.4" width="3" height="5" rx="1.2"/></g></g><g><path d="M646,68.4 C646.5,55.5 660.2,55.5 660.7,69.9" fill="none" stroke="#555" stroke-width="2.6" stroke-linecap="round" stroke-linejoin="round" opacity="0.8" transform="translate(0.9,0.9)"/><path d="M646,68.4 C646.5,55.5 660.2,55.5 660.7,69.9" fill="none" stroke="#7b7b7b" stroke-width="2.6" stroke-linecap="round" stroke-linejoin="round"/><path d="M646,68.4 C646.5,55.5 660.2,55.5 660.7,69.9" fill="none" stroke="#fbfbfb" stroke-width="1.3" stroke-linecap="round" stroke-linejoin="round"/><circle cx="647.3" cy="69.7" r="3" fill="#4a4a4a" opacity="0.75"/><circle cx="646" cy="68.4" r="3" fill="url(#gBall)" stroke="#a96800" stroke-width="0.4"/><circle cx="655" cy="60" r="2.8" fill="#4a4a4a" opacity="0.75"/><circle cx="653.7" cy="58.7" r="2.8" fill="url(#gBall)" stroke="#a96800" stroke-width="0.4"/><circle cx="662" cy="71.2" r="3" fill="#4a4a4a" opacity="0.75"/><circle cx="660.7" cy="69.9" r="3" fill="url(#gBall)" stroke="#a96800" stroke-width="0.4"/></g><circle cx="689.5" cy="64.8" r="5.2" fill="url(#gBall)" stroke="#8a5a10" stroke-width="0.6"/><path d="M734.4,61.4 C733.6,57.6 729,56.2 725.4,56.4 C720.6,56.6 717.6,58.6 718.4,61.2 C719.2,63.6 723,64.8 726,65.8 C728.6,66.8 729.4,68 728,69.6 C726.4,71.4 721.4,71.6 718.8,70.4 C717.6,69.8 717.4,68.8 717.2,68 L715.6,68.4 C715.4,70.4 716.2,72 718.4,72.8 C722.4,74.2 729.6,73.8 732.2,70.4 C734.2,67.6 732.4,65 728.8,63.6 C725.4,62.4 722.4,61.6 723,59.8 C723.6,58.2 726.6,57.6 729.2,58.4 C731.4,59 732.6,60.2 733,61.6 Z" fill="#2a2a2a" stroke="#2a2a2a" stroke-width="0.6" transform="translate(1.1,0.9)"/><path d="M734.4,61.4 C733.6,57.6 729,56.2 725.4,56.4 C720.6,56.6 717.6,58.6 718.4,61.2 C719.2,63.6 723,64.8 726,65.8 C728.6,66.8 729.4,68 728,69.6 C726.4,71.4 721.4,71.6 718.8,70.4 C717.6,69.8 717.4,68.8 717.2,68 L715.6,68.4 C715.4,70.4 716.2,72 718.4,72.8 C722.4,74.2 729.6,73.8 732.2,70.4 C734.2,67.6 732.4,65 728.8,63.6 C725.4,62.4 722.4,61.6 723,59.8 C723.6,58.2 726.6,57.6 729.2,58.4 C731.4,59 732.6,60.2 733,61.6 Z" fill="url(#gS)" stroke="#5a4c00" stroke-width="0.7" stroke-linejoin="round"/><g stroke-linejoin="round"><path d="M750.4,61.3 L762.9,53.3 L773,53.6 L772.4,54.5 L764.1,55.3 L752.8,62.2 L752.8,76.1 L750.4,75.5 Z" fill="#555"/><path d="M752.8,62.2 L764.1,55.3 L764.1,72.8 L760.2,76.1 L752.8,76.1 Z" fill="url(#gOrange)" stroke="#6a4400" stroke-width="0.5"/><path d="M764.7,55 L773,54.2 L765,58.9 Z" fill="#ffb526" stroke="#6a4400" stroke-width="0.5"/><path d="M765.2,59.8 L772.6,55.6 L772.6,61 L765.2,65 Z" fill="#eeedec"/><path d="M765.4,61.8 L772.6,57.8 L772.6,59.6 L765.4,63.6 Z" fill="#8a8a8a" opacity="0.55"/><path d="M764.7,65.7 L772.7,61.6 L772.7,68.4 L764.7,72.8 Z" fill="#ffb526" stroke="#6a4400" stroke-width="0.5"/><path d="M764.4,55.3 V72.8" stroke="#6a4400" stroke-width="0.6"/></g><g><path d="M790.4,70.4 L792.4,56.3 M806,70.4 L804,56.3" stroke="#666" stroke-width="0.6"/><path d="M790.4,70.4 C791,54.6 805.4,54.6 806,70.4" fill="none" stroke="#555" stroke-width="2.4" stroke-linecap="round" stroke-linejoin="round" opacity="0.8" transform="translate(0.9,0.9)"/><path d="M790.4,70.4 C791,54.6 805.4,54.6 806,70.4" fill="none" stroke="#7b7b7b" stroke-width="2.4" stroke-linecap="round" stroke-linejoin="round"/><path d="M790.4,70.4 C791,54.6 805.4,54.6 806,70.4" fill="none" stroke="#fbfbfb" stroke-width="1.1" stroke-linecap="round" stroke-linejoin="round"/><rect x="790.8" y="54.8" width="3.2" height="3.2" fill="#f5a20a" stroke="#a06000" stroke-width="0.4"/><rect x="802.4" y="54.8" width="3.2" height="3.2" fill="#f5a20a" stroke="#a06000" stroke-width="0.4"/><circle cx="791.7" cy="71.7" r="2.9" fill="#4a4a4a" opacity="0.75"/><circle cx="790.4" cy="70.4" r="2.9" fill="url(#gBall)" stroke="#a96800" stroke-width="0.4"/><circle cx="807.3" cy="71.7" r="2.9" fill="#4a4a4a" opacity="0.75"/><circle cx="806" cy="70.4" r="2.9" fill="url(#gBall)" stroke="#a96800" stroke-width="0.4"/></g><path d="M847.0,53.9 L851.0,57.8 L848.6,57.8 L848.6,62.5 L853.3,62.5 L853.3,60.1 L857.2,64.1 L853.3,68.1 L853.3,65.7 L848.6,65.7 L848.6,70.4 L851.0,70.4 L847.0,74.3 L843.0,70.4 L845.4,70.4 L845.4,65.7 L840.7,65.7 L840.7,68.1 L836.8,64.1 L840.7,60.1 L840.7,62.5 L845.4,62.5 L845.4,57.8 L843.0,57.8 Z" fill="#222" opacity="0.75" transform="translate(0.9,0.9)"/><path d="M847.0,53.9 L851.0,57.8 L848.6,57.8 L848.6,62.5 L853.3,62.5 L853.3,60.1 L857.2,64.1 L853.3,68.1 L853.3,65.7 L848.6,65.7 L848.6,70.4 L851.0,70.4 L847.0,74.3 L843.0,70.4 L845.4,70.4 L845.4,65.7 L840.7,65.7 L840.7,68.1 L836.8,64.1 L840.7,60.1 L840.7,62.5 L845.4,62.5 L845.4,57.8 L843.0,57.8 Z" fill="url(#gBlueL)" stroke="#1c3c8c" stroke-width="0.6" stroke-linejoin="round"/><path d="M874.4,64.2 L877.6,63.6 C877.2,68.4 880,71.2 883.6,71.2 C887.2,71.2 889.6,68.4 889.6,65.2 C889.6,62 887.4,59.8 884.6,59.6 L885.4,62.6 L879.6,57.2 L886.6,54.2 L885.6,56.6 C890,57 892.8,60.6 892.8,65.2 C892.8,70.2 888.8,74.4 883.6,74.4 C878.2,74.4 874,70.2 874.4,64.2 Z" fill="#333" opacity="0.7" transform="translate(0.9,0.9)"/><path d="M874.4,64.2 L877.6,63.6 C877.2,68.4 880,71.2 883.6,71.2 C887.2,71.2 889.6,68.4 889.6,65.2 C889.6,62 887.4,59.8 884.6,59.6 L885.4,62.6 L879.6,57.2 L886.6,54.2 L885.6,56.6 C890,57 892.8,60.6 892.8,65.2 C892.8,70.2 888.8,74.4 883.6,74.4 C878.2,74.4 874,70.2 874.4,64.2 Z" fill="url(#gBlue)" stroke="#0a2a90" stroke-width="0.5" stroke-linejoin="round"/><g><path d="M908.9,59.4 L912.4,55.1 L928,55.1 L928,67.8 C927.6,72 923.6,74.8 917.8,75.4 L917.6,73.3 C922.4,72.6 925.6,70.6 925.9,67.3 L925.9,57.3 L912.9,57.3 L909.7,60.8 Z" fill="#222" opacity="0.7" transform="translate(0.9,0.9)"/><path d="M908.9,59.4 L912.4,55.1 L928,55.1 L928,67.8 C927.6,72 923.6,74.8 917.8,75.4 L917.6,73.3 C922.4,72.6 925.6,70.6 925.9,67.3 L925.9,57.3 L912.9,57.3 L909.7,60.8 Z" fill="url(#gBlueH)" stroke="#0a2a90" stroke-width="0.5"/><path d="M912.9,63.5 L916.1,60.4 L923.1,60.2 L923.1,66.2 C922.8,68.4 920.8,69.4 917.8,69.7 L917.5,67.8 C919.6,67.6 920.8,66.8 921,65.6 L921,62.1 L916.7,62.1 L914,65.1 Z" fill="#222" opacity="0.7" transform="translate(0.8,0.8)"/><path d="M912.9,63.5 L916.1,60.4 L923.1,60.2 L923.1,66.2 C922.8,68.4 920.8,69.4 917.8,69.7 L917.5,67.8 C919.6,67.6 920.8,66.8 921,65.6 L921,62.1 L916.7,62.1 L914,65.1 Z" fill="url(#gBlueH)" stroke="#0a2a90" stroke-width="0.5"/></g><path d="M953.7,57 L955.9,57 L955.9,63.6 L959.8,63.6 L959.8,60 L965.4,65 L959.8,70 L959.8,66.6 L955.9,66.6 L955.9,73 L953.7,73 L953.7,66.6 L949.6,66.6 L949.6,70 L944,65 L949.6,60 L949.6,63.6 L953.7,63.6 Z" fill="#333" opacity="0.7" transform="translate(0.9,0.9)"/><path d="M953.7,57 L955.9,57 L955.9,63.6 L959.8,63.6 L959.8,60 L965.4,65 L959.8,70 L959.8,66.6 L955.9,66.6 L955.9,73 L953.7,73 L953.7,66.6 L949.6,66.6 L949.6,70 L944,65 L949.6,60 L949.6,63.6 L953.7,63.6 Z" fill="url(#gBlueH)" stroke="#0a2a90" stroke-width="0.5" stroke-linejoin="round"/><path d="M990.6,54.4 L1000.3,65 L995.5,65 L995.5,73.8 L986.3,73.8 L986.3,65 L980.9,65 Z" fill="#333" opacity="0.75" transform="translate(1.1,1.1)"/><path d="M990.6,54.4 L1000.3,65 L995.5,65 L995.5,73.8 L986.3,73.8 L986.3,65 L980.9,65 Z" fill="url(#gBlue)" stroke="#0a2a90" stroke-width="0.5" stroke-linejoin="round"/><path d="M1022.6,54.4 L1031.3,54.4 L1031.3,64.1 L1036.2,64.1 L1027.4,73.8 L1017.2,64.1 L1022.6,64.1 Z" fill="#333" opacity="0.75" transform="translate(1.1,1.1)"/><path d="M1022.6,54.4 L1031.3,54.4 L1031.3,64.1 L1036.2,64.1 L1027.4,73.8 L1017.2,64.1 L1022.6,64.1 Z" fill="url(#gBlueUp)" stroke="#0a2a90" stroke-width="0.5" stroke-linejoin="round"/><g><path d="M1054,74 V55.9 H1062" fill="none" stroke="#0a14c8" stroke-width="2" stroke-dasharray="2.6,1.6"/><path d="M1062,55.9 H1072.2 V73.8 H1063" fill="none" stroke="#2a8aff" stroke-width="2" stroke-dasharray="2.6,1.6"/><rect x="1053.6" y="66" width="9.6" height="8.6" fill="#fff" stroke="#0a2ab0" stroke-width="2.2"/><rect x="1052.6" y="74.4" width="11.6" height="1" fill="#333" opacity="0.6"/><path d="M1063.6,63.4 L1066.8,60.2 L1065.6,59 L1071,58.2 L1070.2,63.6 L1069,62.4 L1065.8,65.6 Z" fill="url(#gBlue)" stroke="#0a2a90" stroke-width="0.5"/></g><g><path d="M1094.6,74.2 L1102.2,54 L1108.6,70.6 L1101.2,69.4 Z" fill="#0a14e0" stroke="#000" stroke-width="1.2" stroke-linejoin="round"/><path d="M1088.6,58.6 L1092.8,54.6 L1102.4,65.4 L1101.6,69.8 L1097.6,68.8 Z" fill="#2a6ae0" stroke="#000" stroke-width="0.9" stroke-linejoin="round"/><path d="M1090,57.2 L1099.6,68 M1091.4,56 L1101,66.8" stroke="#9cc4ff" stroke-width="0.6"/><path d="M1097.6,68.8 L1102.4,65.4 L1101.6,69.8 Z" fill="#f4f4f4" stroke="#000" stroke-width="0.5"/></g><g><path d="M1125,61.6 L1131.4,55.6 L1137.2,60.6 L1144,56.8" fill="none" stroke="#555" stroke-width="2.4" stroke-linecap="round" stroke-linejoin="round" opacity="0.8" transform="translate(0.9,0.9)"/><path d="M1125,61.6 L1131.4,55.6 L1137.2,60.6 L1144,56.8" fill="none" stroke="#7b7b7b" stroke-width="2.4" stroke-linecap="round" stroke-linejoin="round"/><path d="M1125,61.6 L1131.4,55.6 L1137.2,60.6 L1144,56.8" fill="none" stroke="#fbfbfb" stroke-width="1.1" stroke-linecap="round" stroke-linejoin="round"/><path d="M1125,72.4 C1128,67.4 1132.6,68.8 1135,71 C1137.6,73.2 1141.4,72.4 1144,68.6" fill="none" stroke="#555" stroke-width="2.4" stroke-linecap="round" stroke-linejoin="round" opacity="0.8" transform="translate(0.9,0.9)"/><path d="M1125,72.4 C1128,67.4 1132.6,68.8 1135,71 C1137.6,73.2 1141.4,72.4 1144,68.6" fill="none" stroke="#7b7b7b" stroke-width="2.4" stroke-linecap="round" stroke-linejoin="round"/><path d="M1125,72.4 C1128,67.4 1132.6,68.8 1135,71 C1137.6,73.2 1141.4,72.4 1144,68.6" fill="none" stroke="#fbfbfb" stroke-width="1.1" stroke-linecap="round" stroke-linejoin="round"/><path d="M1130.2,64.2 L1138.6,64.2 L1134.4,68.6 Z" fill="#1a4ae0" stroke="#0a1a70" stroke-width="0.5"/></g><g><path d="M1160.5,71.6 H1181.5" stroke="#6a6a6a" stroke-width="2.4" stroke-linecap="round"/><path d="M1160.5,71.2 H1181.5" stroke="#b0b0b0" stroke-width="1" stroke-linecap="round"/><circle cx="1170.8" cy="71" r="2.9" fill="url(#gBlueBall)" stroke="#0a2a90" stroke-width="0.4"/><path d="M1169.5,56.6 h2.8 v3 h3 v2.8 h-3 v3 h-2.8 v-3 h-3 v-2.8 h3 Z" fill="#0a3ae0" stroke="#0a1a90" stroke-width="0.5"/></g><g><path d="M1196.8,69.8 H1217" stroke="#6a6a6a" stroke-width="2.4" stroke-linecap="round"/><path d="M1196.8,69.3 H1217" stroke="#f0f0f0" stroke-width="1" stroke-linecap="round"/><circle cx="1206.9" cy="69" r="2.9" fill="url(#gBlueBall)" stroke="#0a2a90" stroke-width="0.4"/><rect x="1202.4" y="57.8" width="9.2" height="2.8" fill="#0a3ae0" stroke="#0a1a90" stroke-width="0.5"/></g><g stroke-linejoin="round"><path d="M1233.2,71.2 L1242.4,68 L1252.6,70.4 L1243.3,75 Z" fill="#f8f8f8" stroke="#333" stroke-width="1.2"/><path d="M1234,72.8 L1243.6,76.4 L1253.6,71.4" fill="none" stroke="#444" stroke-width="0.9" opacity="0.75"/><path d="M1232.2,59.2 L1241.9,53.4 L1253,57.3 L1242.9,62.1 Z" fill="#2a8cf4" stroke="#0a1a50" stroke-width="0.6"/><path d="M1232.2,59.2 L1242.9,62.1 L1242.9,71 L1232.2,67.2 Z" fill="#1448d8" stroke="#0a1a50" stroke-width="0.6"/><path d="M1242.9,62.1 L1253,57.3 L1253,66.2 L1242.9,71 Z" fill="#1e68e6" stroke="#0a1a50" stroke-width="0.6"/></g><g fill="none" stroke-width="1.1"><path d="M1267.6,58.7 L1274.9,54.4 L1281.2,58.3 L1273.9,62.1 Z" stroke="#1414ff"/><ellipse cx="1284.1" cy="57.6" rx="5.5" ry="3.3" stroke="#1414ff"/><path d="M1267.6,70.9 L1276.3,75.2 L1282.7,70.9 L1274.4,67.5 Z" stroke="#ff1414"/><ellipse cx="1284.1" cy="70.2" rx="5.5" ry="3.3" stroke="#ff1414"/></g><path d="M1273.9,59.8 L1277.2,63.4 L1275.4,63.4 L1275.4,68.6 L1272.4,68.6 L1272.4,63.4 L1270.6,63.4 Z" fill="url(#gBlue)" stroke="#0a2a90" stroke-width="0.5"/><path d="M1283.6,68.8 L1286.9,65.2 L1285.1,65.2 L1285.1,60 L1282.1,60 L1282.1,65.2 L1280.3,65.2 Z" fill="url(#gBlue)" stroke="#0a2a90" stroke-width="0.5"/><rect x="1305.5" y="56.3" width="3.4" height="5.8" rx="0.8" fill="#333" opacity="0.7" transform="translate(0.8,0.8)"/><rect x="1305.5" y="56.3" width="3.4" height="5.8" rx="0.8" fill="#2a6af0" stroke="#0a2a90" stroke-width="0.5"/><rect x="1305.5" y="66.7" width="3.4" height="6.1" rx="0.8" fill="#333" opacity="0.7" transform="translate(0.8,0.8)"/><rect x="1305.5" y="66.7" width="3.4" height="6.1" rx="0.8" fill="#2a6af0" stroke="#0a2a90" stroke-width="0.5"/><rect x="1312.5" y="56.3" width="3.4" height="5.8" rx="0.8" fill="#333" opacity="0.7" transform="translate(0.8,0.8)"/><rect x="1312.5" y="56.3" width="3.4" height="5.8" rx="0.8" fill="#2a6af0" stroke="#0a2a90" stroke-width="0.5"/><rect x="1312.5" y="66.7" width="3.4" height="6.1" rx="0.8" fill="#333" opacity="0.7" transform="translate(0.8,0.8)"/><rect x="1312.5" y="66.7" width="3.4" height="6.1" rx="0.8" fill="#2a6af0" stroke="#0a2a90" stroke-width="0.5"/><rect x="1320.3" y="56.3" width="3.4" height="5.8" rx="0.8" fill="#333" opacity="0.7" transform="translate(0.8,0.8)"/><rect x="1320.3" y="56.3" width="3.4" height="5.8" rx="0.8" fill="#2a6af0" stroke="#0a2a90" stroke-width="0.5"/><rect x="1320.3" y="66.7" width="3.4" height="6.1" rx="0.8" fill="#333" opacity="0.7" transform="translate(0.8,0.8)"/><rect x="1320.3" y="66.7" width="3.4" height="6.1" rx="0.8" fill="#2a6af0" stroke="#0a2a90" stroke-width="0.5"/><g><path d="M1343.6,71 C1352,69 1347.6,58.6 1358.6,58" fill="none" stroke="#111" stroke-width="1.5"/><rect x="1341.2" y="67.5" width="4.3" height="7.3" fill="#333" opacity="0.7" transform="translate(0.8,0.8)"/><rect x="1341.2" y="67.5" width="4.3" height="7.3" fill="#2a6af0" stroke="#0a2a90" stroke-width="0.5"/><rect x="1346.3" y="62.1" width="7.5" height="3.4" fill="#333" opacity="0.7" transform="translate(0.8,0.8)"/><rect x="1346.3" y="62.1" width="7.5" height="3.4" fill="#2a6af0" stroke="#0a2a90" stroke-width="0.5"/><rect x="1356.4" y="54.4" width="4.4" height="7.3" fill="#333" opacity="0.7" transform="translate(0.8,0.8)"/><rect x="1356.4" y="54.4" width="4.4" height="7.3" fill="#2a6af0" stroke="#0a2a90" stroke-width="0.5"/></g><g><path d="M1378.9,60.4 C1379.2,55.6 1382.4,53.4 1386.8,53.4 C1391.2,53.4 1394.6,55.6 1394.9,60.4 L1395.7,65.1 L1397.9,67.7 L1397.2,71.1 L1394.9,74.2 L1390.4,76 L1386.6,74.5 L1382.8,76 L1379.1,74.2 L1377.2,71.1 L1376.2,67.7 L1378.9,65.1 Z" fill="#222" opacity="0.6" transform="translate(0.9,0.9)"/><path d="M1378.9,60.4 C1379.2,55.6 1382.4,53.4 1386.8,53.4 C1391.2,53.4 1394.6,55.6 1394.9,60.4 L1395.7,65.1 L1397.9,67.7 L1397.2,71.1 L1394.9,74.2 L1390.4,76 L1386.6,74.5 L1382.8,76 L1379.1,74.2 L1377.2,71.1 L1376.2,67.7 L1378.9,65.1 Z" fill="url(#gHelm)" stroke="#1a1a1a" stroke-width="0.8" stroke-linejoin="round"/><path d="M1379.3,59.8 C1379.8,55.8 1382.8,53.9 1386.8,53.9 C1390.8,53.9 1394,55.8 1394.5,59.8 Z" fill="#ffffff"/><path d="M1378.3,60.3 H1395" stroke="#111" stroke-width="1.1"/><path d="M1380.8,62 L1385.2,62.2 L1384.6,63.5 C1383.4,63.9 1381.6,63.5 1380.8,62 Z M1392.8,62 L1388.4,62.2 L1389,63.5 C1390.2,63.9 1392,63.5 1392.8,62 Z" fill="#0a0a0a"/><path d="M1381.3,69.6 C1383.4,68.8 1384.8,66.8 1386.7,66.6 C1388.6,66.8 1390,68.8 1392,69.6" fill="none" stroke="#0a0a0a" stroke-width="1"/><path d="M1379.8,65 l0.8,1 M1393.8,65 l-0.8,1" stroke="#111" stroke-width="0.7"/><circle cx="1382.5" cy="72.8" r="0.95" fill="#0a0a0a"/><circle cx="1390.6" cy="72.8" r="0.95" fill="#0a0a0a"/><rect x="1385.3" y="71" width="2.4" height="3.6" rx="0.6" fill="#4a4a4a"/></g><g><rect x="1418" y="71.6" width="15" height="2" fill="#b8b8b8"/><rect x="1417.2" y="58.2" width="15.6" height="13.6" fill="#efefef" stroke="#c2c2c2" stroke-width="0.7"/><path d="M1417.4,71.6 L1432.6,58.4 L1432.6,71.6 Z" fill="#dedede"/><circle cx="1426.4" cy="66" r="2.2" fill="none" stroke="#7a7aff" stroke-width="0.8"/><path d="M1424.4,69.6 L1430.2,62.4 L1430.2,69.6 Z" fill="none" stroke="#9a9aa8" stroke-width="0.5"/><path d="M1412.4,60.3 L1418,60.3 L1419.5,57 L1425.4,62.8 L1418.8,68.4 L1418,66.5 L1412.4,66.5 Z" fill="url(#gBlueH)" stroke="#000" stroke-width="1.2" stroke-linejoin="round"/></g><g><path d="M1463.9,64.6 V62.2 C1463.9,59.4 1465.4,58.3 1467.05,58.3 C1468.7,58.3 1470.2,59.4 1470.2,62.2 V64.6" fill="none" stroke="#08382c" stroke-width="2.9"/><path d="M1463.9,64.6 V62.2 C1463.9,59.4 1465.4,58.3 1467.05,58.3 C1468.7,58.3 1470.2,59.4 1470.2,62.2 V64.6" fill="none" stroke="#0a9a74" stroke-width="1.5"/><rect x="1462.3" y="64.4" width="9.5" height="7.3" fill="url(#gLock)" stroke="#08382c" stroke-width="0.9"/><path d="M1463,66.4h8.2M1463,68.1h8.2M1463,69.8h8.2" stroke="#06775a" stroke-width="0.5"/></g><g><path d="M1486.2,70.9 L1499,59.2" stroke="#08382c" stroke-width="3.6" stroke-linecap="butt"/><circle cx="1492.7" cy="65.3" r="3.9" fill="#08382c"/><path d="M1486.6,70.5 L1498.6,59.6" stroke="#00a57c" stroke-width="1.9" stroke-linecap="butt"/><circle cx="1492.7" cy="65.3" r="3" fill="#00a57c"/></g><path d="M1517.8,58.2 H1520.6 V68.6 H1526.3 V71.5 H1512 V68.6 H1517.8 Z" fill="#00a57c" stroke="#08382c" stroke-width="0.95" stroke-linejoin="round"/><g><rect x="1540.05" y="58.10" width="3.00" height="14.20" rx="1.2" fill="#08382c" stroke="#08382c" stroke-width="1.9" stroke-linejoin="round"/><rect x="1537.95" y="60.20" width="14.20" height="3.00" rx="1.2" fill="#08382c" stroke="#08382c" stroke-width="1.9" stroke-linejoin="round"/><rect x="1547.05" y="58.10" width="3.00" height="14.20" rx="1.2" fill="#08382c" stroke="#08382c" stroke-width="1.9" stroke-linejoin="round"/><rect x="1537.95" y="67.20" width="14.20" height="3.00" rx="1.2" fill="#08382c" stroke="#08382c" stroke-width="1.9" stroke-linejoin="round"/><rect x="1540.05" y="58.10" width="3.00" height="14.20" rx="1" fill="#00a57c"/><rect x="1537.95" y="60.20" width="14.20" height="3.00" rx="1" fill="#00a57c"/><rect x="1547.05" y="58.10" width="3.00" height="14.20" rx="1" fill="#00a57c"/><rect x="1537.95" y="67.20" width="14.20" height="3.00" rx="1" fill="#00a57c"/><rect x="1543.05" y="63.20" width="4" height="4" fill="#f1f0ee"/></g><path d="M1570.90,62.77 L1575.46,58.21 L1577.79,60.54 L1573.23,65.10 L1577.79,69.66 L1575.46,71.99 L1570.90,67.43 L1566.34,71.99 L1564.01,69.66 L1568.57,65.10 L1564.01,60.54 L1566.34,58.21 Z" fill="#00a57c" stroke="#08382c" stroke-width="0.95" stroke-linejoin="round"/><g><path d="M1592.4,58.9 L1604,65.4 M1590.2,64.5 L1601.4,70.9" stroke="#0b4a3a" stroke-width="3.2"/><path d="M1592.9,59.2 L1603.5,65.1 M1590.7,64.8 L1600.9,70.6" stroke="#00a57c" stroke-width="1.7"/></g><g><path d="M1629.3,59.4 L1619.2,68.6" stroke="#08382c" stroke-width="3.6" stroke-linecap="butt"/><circle cx="1619" cy="68.4" r="3.5" fill="#08382c"/><path d="M1628.7,59.95 L1619.2,68.6" stroke="#00a57c" stroke-width="1.9" stroke-linecap="butt"/><circle cx="1619" cy="68.4" r="2.65" fill="#00a57c"/></g><g><path d="M1648.9,59.8 L1654,64.9 L1648.9,70 L1643.8,64.9 Z" fill="#fdfdfc" stroke="#08382c" stroke-width="1.1"/><circle cx="1648.9" cy="59.8" r="2" fill="#00a57c" stroke="#08382c" stroke-width="0.8"/><circle cx="1654" cy="64.9" r="2" fill="#00a57c" stroke="#08382c" stroke-width="0.8"/><circle cx="1648.9" cy="70" r="2" fill="#00a57c" stroke="#08382c" stroke-width="0.8"/><circle cx="1643.8" cy="64.9" r="2" fill="#00a57c" stroke="#08382c" stroke-width="0.8"/></g><g><circle cx="1674.8" cy="64.9" r="6.5" fill="#00a57c" stroke="#0b4a3a" stroke-width="1.1"/><circle cx="1674.8" cy="64.9" r="3.9" fill="none" stroke="#0b4a3a" stroke-width="0.9"/><circle cx="1674.8" cy="64.9" r="2.9" fill="none" stroke="#d8f4ec" stroke-width="0.7"/><circle cx="1674.8" cy="64.9" r="1.5" fill="#00a57c" stroke="#0b4a3a" stroke-width="0.7"/></g><circle cx="1695.6" cy="65.2" r="2" fill="#00a57c" stroke="#0b4a3a" stroke-width="0.7"/><circle cx="1701.1" cy="65.2" r="2" fill="#00a57c" stroke="#0b4a3a" stroke-width="0.7"/><circle cx="1706.6" cy="65.2" r="2" fill="#00a57c" stroke="#0b4a3a" stroke-width="0.7"/><g><path d="M1721,63.9 L1731.2,70.3" stroke="#0b4a3a" stroke-width="3.2"/><path d="M1721.6,64.3 L1730.6,69.9" stroke="#00a57c" stroke-width="1.7"/><circle cx="1729.9" cy="60.8" r="2.3" fill="#00a57c" stroke="#0b4a3a" stroke-width="0.7"/></g><g><path d="M1753.3,59.8 V70 M1748.2,64.9 H1758.4" stroke="#08382c" stroke-width="3.6" stroke-linecap="round"/><path d="M1753.3,59.8 V70 M1748.2,64.9 H1758.4" stroke="#00a57c" stroke-width="1.9" stroke-linecap="round"/></g><g fill="none" stroke="#0c7a5c" stroke-width="1.5"><path d="M1777.6,71.2 V62.5 H1785 V65.7"/><path d="M1773.4,70.2 h3 M1776.2,71 h2.8" stroke-width="1"/></g><g fill="none" stroke="#0c6a50" stroke-width="0.9"><path d="M1777.4,58.6 v2.8 M1779.6,61.4 v0.4 M1780.8,58.6 h1.6 v2.8 h-1.6 Z M1783.6,58.6 h1.6 v2.8 h-1.6 Z"/><path d="M1772.4,68.6 h2.8 M1772.4,63.2 v1.6 h2.8 v-1.6 Z M1772.4,65.8 v1.6 h2.8 v-1.6 Z"/></g><g><rect x="1798.3" y="58.4" width="13.5" height="13.2" rx="1.6" fill="#06b488" stroke="#08382c" stroke-width="1"/><circle cx="1802.9" cy="66.9" r="1.7" fill="#10c496" stroke="#08382c" stroke-width="0.8"/></g></svg>
<!-- left.html -->
<div class="t" style="left:2.4px;top:90.67px;font-size:14.6px;">Combo View</div>
<svg style="left:272px;top:91px" width="30" height="13" viewBox="272 91 30 13"><g fill="none" stroke="#5a5955" stroke-width="1"><rect x="273.5" y="92.5" width="10" height="10" rx="1.5"/><rect x="290.5" y="92.5" width="10" height="10" rx="1.5"/><rect x="278.5" y="94.5" width="4" height="4" rx="0.8"/><rect x="275.5" y="96.5" width="4" height="4" rx="0.8" fill="#f2f1f0"/></g><path d="M293.2,95.2 L297.8,99.8 M297.8,95.2 L293.2,99.8" stroke="#5a5955" stroke-width="2" fill="none"/></svg>
<div class="abs" style="left:0;top:139px;width:304px;height:892px;border:1px solid #b5b1a9;border-radius:3px;box-sizing:border-box;background:#f5f4f3;box-shadow:inset 0 1px 0 #fbfbfa, inset 1px 0 0 #fbfbfa;"></div>
<div class="abs" style="left:58px;top:113px;width:52px;height:26px;border:1px solid #c6c3bd;border-bottom:none;border-radius:4px 4px 0 0;box-sizing:border-box;background:linear-gradient(#f1f0ee,#e9e8e6 70%,#dddcda);"></div>
<div class="t" style="left:66.5px;top:119.07px;font-size:14.6px;letter-spacing:-0.2px;">Tasks</div>
<div class="abs" style="left:1px;top:110px;width:58px;height:31px;border:1px solid #bdbab3;border-bottom:none;border-radius:5px 5px 0 0;box-sizing:border-box;background:linear-gradient(#fbfbfa,#f2f1f0 60%);"></div>
<div class="t" style="left:8.5px;top:118.27px;font-size:14.6px;letter-spacing:0.25px;">Model</div>
<div class="abs" style="left:2px;top:140px;width:300px;height:406px;border:1px solid #b8b5ae;box-sizing:border-box;background:#fff;"></div>
<div class="abs" style="left:3px;top:141px;width:298px;height:26px;background:#f2f1f0;"></div>
<div class="abs" style="left:3px;top:141px;width:156px;height:25px;border-right:1px solid #c4c1bb;border-bottom:1px solid #bab7b0;box-sizing:content-box;background:linear-gradient(#fdfdfd,#f6f5f4 60%,#ecebe9);"></div>
<div class="t" style="left:7px;top:148.27px;font-size:14.6px;letter-spacing:0.3px;">Labels &amp; Attributes</div>
<div class="t" style="left:6px;top:170.07px;font-size:14.6px;letter-spacing:0.38px;">Application</div>
<svg style="left:27px;top:187px" width="14" height="17" viewBox="0 0 14 17"><rect x="1" y="1" width="11.4" height="14" fill="#e9e8e6" stroke="#c2c1be" stroke-width="0.8"/><rect x="0.8" y="14.6" width="11.8" height="1" fill="#a9a8a5"/><circle cx="7.5" cy="6.2" r="3.1" fill="#d0140f"/><ellipse cx="7" cy="5" rx="1.6" ry="1" fill="#f47b70" opacity="0.8"/><rect x="2.5" y="6.5" width="6.5" height="6.5" fill="#2b3fb8"/><rect x="2.5" y="6.5" width="6.5" height="2" fill="#5b7be0" opacity="0.7"/></svg>
<div class="t" style="left:48px;top:188.57px;font-size:14.6px;">Unnamed</div>
<svg style="left:27px;top:206px" width="14" height="17" viewBox="0 0 14 17"><rect x="1" y="1" width="11.4" height="14" fill="#e9e8e6" stroke="#c2c1be" stroke-width="0.8"/><rect x="0.8" y="14.6" width="11.8" height="1" fill="#a9a8a5"/><circle cx="7.5" cy="6.2" r="3.1" fill="#d0140f"/><ellipse cx="7" cy="5" rx="1.6" ry="1" fill="#f47b70" opacity="0.8"/><rect x="2.5" y="6.5" width="6.5" height="6.5" fill="#2b3fb8"/><rect x="2.5" y="6.5" width="6.5" height="2" fill="#5b7be0" opacity="0.7"/></svg>
<div class="t" style="left:48px;top:207.57px;font-size:14.6px;font-weight:bold;">F2-T23-ejemplo</div>
<svg style="left:46px;top:224px" width="18" height="18" viewBox="0 0 18 18"><g fill="none" stroke="#2525f5" stroke-width="1.35"><rect x="1.1" y="7.4" width="9.6" height="8.2"/><circle cx="10.4" cy="7.1" r="5"/></g></svg>
<div class="t" style="left:68px;top:226.57px;font-size:14.6px;">Line</div>
<svg style="left:46px;top:243px" width="18" height="18" viewBox="0 0 18 18"><g fill="none" stroke="#2525f5" stroke-width="1.35"><rect x="1.1" y="7.4" width="9.6" height="8.2"/><circle cx="10.4" cy="7.1" r="5"/></g></svg>
<div class="t" style="left:68px;top:245.57px;font-size:14.6px;">Line001</div>
<svg style="left:46px;top:262px" width="18" height="18" viewBox="0 0 18 18"><g fill="none" stroke="#2525f5" stroke-width="1.35"><rect x="1.1" y="7.4" width="9.6" height="8.2"/><circle cx="10.4" cy="7.1" r="5"/></g></svg>
<div class="t" style="left:68px;top:264.57px;font-size:14.6px;">Line002</div>
<svg style="left:46px;top:281px" width="18" height="18" viewBox="0 0 18 18"><g fill="none" stroke="#2525f5" stroke-width="1.35"><rect x="1.1" y="7.4" width="9.6" height="8.2"/><circle cx="10.4" cy="7.1" r="5"/></g></svg>
<div class="t" style="left:68px;top:283.57px;font-size:14.6px;">Line003</div>
<svg style="left:46px;top:300px" width="18" height="18" viewBox="0 0 18 18"><g fill="none" stroke="#2525f5" stroke-width="1.35"><rect x="1.1" y="7.4" width="9.6" height="8.2"/><circle cx="10.4" cy="7.1" r="5"/></g></svg>
<div class="t" style="left:68px;top:302.57px;font-size:14.6px;">DWire</div>
<svg style="left:46px;top:319px" width="18" height="18" viewBox="0 0 18 18"><g fill="none" stroke="#2525f5" stroke-width="1.35"><rect x="1.1" y="7.4" width="9.6" height="8.2"/><circle cx="10.4" cy="7.1" r="5"/></g></svg>
<div class="t" style="left:68px;top:321.57px;font-size:14.6px;">DWire001</div>
<svg style="left:46px;top:338px" width="18" height="18" viewBox="0 0 18 18"><g fill="none" stroke="#2525f5" stroke-width="1.35"><rect x="1.1" y="7.4" width="9.6" height="8.2"/><circle cx="10.4" cy="7.1" r="5"/></g></svg>
<div class="t" style="left:68px;top:340.57px;font-size:14.6px;">Line004</div>
<svg style="left:46px;top:357px" width="18" height="18" viewBox="0 0 18 18"><g fill="none" stroke="#2525f5" stroke-width="1.35"><rect x="1.1" y="7.4" width="9.6" height="8.2"/><circle cx="10.4" cy="7.1" r="5"/></g></svg>
<div class="t" style="left:68px;top:359.57px;font-size:14.6px;">Line005</div>
<svg style="left:46px;top:376px" width="18" height="18" viewBox="0 0 18 18"><g fill="none" stroke="#2525f5" stroke-width="1.35"><rect x="1.1" y="7.4" width="9.6" height="8.2"/><circle cx="10.4" cy="7.1" r="5"/></g></svg>
<div class="t" style="left:68px;top:378.57px;font-size:14.6px;">Line006</div>
<svg style="left:46px;top:395px" width="18" height="18" viewBox="0 0 18 18"><g fill="none" stroke="#2525f5" stroke-width="1.35"><rect x="1.1" y="7.4" width="9.6" height="8.2"/><circle cx="10.4" cy="7.1" r="5"/></g></svg>
<div class="t" style="left:68px;top:397.57px;font-size:14.6px;">Line007</div>
<svg style="left:46px;top:414px" width="18" height="18" viewBox="0 0 18 18"><g fill="none" stroke="#2525f5" stroke-width="1.35"><rect x="1.1" y="7.4" width="9.6" height="8.2"/><circle cx="10.4" cy="7.1" r="5"/></g></svg>
<div class="t" style="left:68px;top:416.57px;font-size:14.6px;">Line008</div>
<svg style="left:46px;top:433px" width="18" height="18" viewBox="0 0 18 18"><g fill="none" stroke="#2525f5" stroke-width="1.35"><rect x="1.1" y="7.4" width="9.6" height="8.2"/><circle cx="10.4" cy="7.1" r="5"/></g></svg>
<div class="t" style="left:68px;top:435.57px;font-size:14.6px;">Line009</div>
<svg style="left:46px;top:452px" width="18" height="18" viewBox="0 0 18 18"><g fill="none" stroke="#2525f5" stroke-width="1.35"><rect x="1.1" y="7.4" width="9.6" height="8.2"/><circle cx="10.4" cy="7.1" r="5"/></g></svg>
<div class="t" style="left:68px;top:454.57px;font-size:14.6px;">Line010</div>
<div class="abs" style="left:3px;top:471px;width:157px;height:19px;background:linear-gradient(#e9e8e7,#dad9d7);"></div>
<svg style="left:46px;top:471px" width="18" height="18" viewBox="0 0 18 18"><g fill="none" stroke="#7b52d0" stroke-width="1.35"><rect x="1.1" y="7.4" width="9.6" height="8.2"/><circle cx="10.4" cy="7.1" r="5"/></g></svg>
<div class="t" style="left:68px;top:473.57px;font-size:14.6px;font-weight:bold;color:#1a1a18;letter-spacing:0.26px;">DWire002</div>
<svg style="left:10px;top:210px" width="12" height="10" viewBox="0 0 12 10"><polygon points="2,1.6 9,1.6 5.5,7.2" fill="#8b8a86" stroke="#5e5d59" stroke-width="0.8"/></svg>
<div class="abs" style="left:148px;top:547px;width:1px;height:4px;background:#c2bfb9;box-shadow:3px 0 0 #c2bfb9,6px 0 0 #c2bfb9;"></div>
<div class="abs" style="left:3px;top:552px;width:299px;height:448px;border:1px solid #b8b5ae;border-radius:3px;box-sizing:border-box;"></div>
<div class="abs" style="left:5px;top:554px;width:279px;height:444px;background:#fff;border-right:1px solid #b8b5ae;border-bottom:1px solid #b8b5ae;box-sizing:border-box;overflow:hidden;">
<div class="abs" style="left:0;top:0;width:278px;height:25px;border-bottom:1px solid #bab7b0;background:linear-gradient(#fefefe,#f7f6f5 55%,#ecebe9);"></div>
<div class="abs" style="left:99px;top:0;width:1px;height:25px;background:#c9c6c0;"></div>
<div class="t" style="left:4.5px;top:7.47px;font-size:14.6px;letter-spacing:0.4px;">Property</div>
<div class="t" style="left:104.5px;top:7.47px;font-size:14.6px;">Value</div>
<div class="abs" style="left:0;top:26px;width:278px;height:20px;background:#c8c7c5;"></div>
<div class="t" style="left:23px;top:30.07px;font-size:14.6px;font-weight:bold;color:#fff;letter-spacing:-0.5px;">Base</div>
<div class="abs" style="left:0;top:46px;width:278px;height:20px;background:#efefef;"></div>
<div class="abs" style="left:20px;top:65px;width:258px;height:1px;background:#c2c0bb;"></div>
<div class="abs" style="left:99px;top:46px;width:1px;height:20px;background:#c2c0bb;"></div>
<div class="t" style="left:23px;top:50.07px;font-size:14.6px;letter-spacing:0.28px;">Boundin…</div>
<div class="t" style="left:103.3px;top:50.07px;font-size:14.6px;">false</div>
<div class="abs" style="left:20px;top:85px;width:258px;height:1px;background:#c2c0bb;"></div>
<div class="abs" style="left:99px;top:66px;width:1px;height:20px;background:#c2c0bb;"></div>
<div class="t" style="left:23px;top:70.07px;font-size:14.6px;letter-spacing:0.36px;">Deviation</div>
<div class="t" style="left:103.3px;top:70.07px;font-size:14.6px;letter-spacing:-0.25px;">0,50</div>
<div class="abs" style="left:0;top:86px;width:278px;height:20px;background:#efefef;"></div>
<div class="abs" style="left:20px;top:105px;width:258px;height:1px;background:#c2c0bb;"></div>
<div class="abs" style="left:99px;top:86px;width:1px;height:20px;background:#c2c0bb;"></div>
<div class="t" style="left:23px;top:90.07px;font-size:14.6px;">Display …</div>
<div class="t" style="left:103.3px;top:90.07px;font-size:14.6px;letter-spacing:-0.1px;">Flat Lines</div>
<div class="abs" style="left:20px;top:125px;width:258px;height:1px;background:#c2c0bb;"></div>
<div class="abs" style="left:99px;top:106px;width:1px;height:20px;background:#c2c0bb;"></div>
<div class="t" style="left:23px;top:110.07px;font-size:14.6px;letter-spacing:0.1px;">Draw Style</div>
<div class="t" style="left:103.3px;top:110.07px;font-size:14.6px;">Solid</div>
<div class="abs" style="left:0;top:126px;width:278px;height:20px;background:#efefef;"></div>
<div class="abs" style="left:20px;top:145px;width:258px;height:1px;background:#c2c0bb;"></div>
<div class="abs" style="left:99px;top:126px;width:1px;height:20px;background:#c2c0bb;"></div>
<div class="t" style="left:23px;top:130.07px;font-size:14.6px;letter-spacing:0.34px;">Lighting</div>
<div class="t" style="left:103.3px;top:130.07px;font-size:14.6px;">Two side</div>
<div class="abs" style="left:20px;top:165px;width:258px;height:1px;background:#c2c0bb;"></div>
<div class="abs" style="left:99px;top:146px;width:1px;height:20px;background:#c2c0bb;"></div>
<div class="t" style="left:23px;top:150.07px;font-size:14.6px;">Line Color</div>
<div class="abs" style="left:103px;top:146px;width:24px;height:19px;background:#000;"></div>
<div class="t" style="left:133.5px;top:150.07px;font-size:14.6px;letter-spacing:-0.15px;">[0, 0, 0]</div>
<div class="abs" style="left:0;top:166px;width:278px;height:20px;background:#efefef;"></div>
<div class="abs" style="left:20px;top:185px;width:258px;height:1px;background:#c2c0bb;"></div>
<div class="abs" style="left:99px;top:166px;width:1px;height:20px;background:#c2c0bb;"></div>
<div class="t" style="left:23px;top:170.07px;font-size:14.6px;letter-spacing:0.2px;">Line Width</div>
<div class="t" style="left:103.3px;top:170.07px;font-size:14.6px;letter-spacing:-0.2px;">2,00</div>
<div class="abs" style="left:20px;top:205px;width:258px;height:1px;background:#c2c0bb;"></div>
<div class="abs" style="left:99px;top:186px;width:1px;height:20px;background:#c2c0bb;"></div>
<div class="t" style="left:23px;top:190.07px;font-size:14.6px;letter-spacing:0.12px;">Point Co…</div>
<div class="abs" style="left:103px;top:186px;width:24px;height:19px;background:#000;"></div>
<div class="t" style="left:133.5px;top:190.07px;font-size:14.6px;letter-spacing:-0.15px;">[0, 0, 0]</div>
<div class="abs" style="left:0;top:206px;width:278px;height:20px;background:#efefef;"></div>
<div class="abs" style="left:20px;top:225px;width:258px;height:1px;background:#c2c0bb;"></div>
<div class="abs" style="left:99px;top:206px;width:1px;height:20px;background:#c2c0bb;"></div>
<div class="t" style="left:23px;top:210.07px;font-size:14.6px;">Point Size</div>
<div class="t" style="left:103.3px;top:210.07px;font-size:14.6px;letter-spacing:-0.2px;">2,00</div>
<div class="abs" style="left:20px;top:245px;width:258px;height:1px;background:#c2c0bb;"></div>
<div class="abs" style="left:99px;top:226px;width:1px;height:20px;background:#c2c0bb;"></div>
<div class="t" style="left:23px;top:230.07px;font-size:14.6px;letter-spacing:0.12px;">Selectable</div>
<div class="t" style="left:103.3px;top:230.07px;font-size:14.6px;letter-spacing:0.6px;">true</div>
<div class="abs" style="left:0;top:246px;width:278px;height:20px;background:#efefef;"></div>
<div class="abs" style="left:20px;top:265px;width:258px;height:1px;background:#c2c0bb;"></div>
<div class="abs" style="left:99px;top:246px;width:1px;height:20px;background:#c2c0bb;"></div>
<div class="t" style="left:23px;top:250.07px;font-size:14.6px;letter-spacing:-0.5px;">Shape C…</div>
<div class="abs" style="left:103px;top:246px;width:24px;height:19px;background:#cccccc;"></div>
<div class="t" style="left:133.5px;top:250.07px;font-size:14.6px;">[204, 204, 204]</div>
<div class="abs" style="left:20px;top:285px;width:258px;height:1px;background:#c2c0bb;"></div>
<div class="abs" style="left:99px;top:266px;width:1px;height:20px;background:#c2c0bb;"></div>
<div class="t" style="left:23px;top:270.07px;font-size:14.6px;letter-spacing:-0.18px;">Transpar…</div>
<div class="t" style="left:103.3px;top:270.07px;font-size:14.6px;">0</div>
<div class="abs" style="left:0;top:286px;width:278px;height:20px;background:#efefef;"></div>
<div class="abs" style="left:20px;top:305px;width:258px;height:1px;background:#c2c0bb;"></div>
<div class="abs" style="left:99px;top:286px;width:1px;height:20px;background:#c2c0bb;"></div>
<div class="t" style="left:23px;top:290.07px;font-size:14.6px;letter-spacing:0.42px;">Visibility</div>
<div class="t" style="left:103.3px;top:290.07px;font-size:14.6px;letter-spacing:0.6px;">true</div>
<div class="abs" style="left:0;top:306px;width:278px;height:20px;background:#c8c7c5;"></div>
<div class="t" style="left:23px;top:310.07px;font-size:14.6px;font-weight:bold;color:#fff;letter-spacing:0.65px;">Draft</div>
<div class="abs" style="left:0;top:326px;width:278px;height:20px;background:#efefef;"></div>
<div class="abs" style="left:20px;top:345px;width:258px;height:1px;background:#c2c0bb;"></div>
<div class="abs" style="left:99px;top:326px;width:1px;height:20px;background:#c2c0bb;"></div>
<div class="t" style="left:23px;top:330.07px;font-size:14.6px;letter-spacing:0.25px;">End Arrow</div>
<div class="t" style="left:103.3px;top:330.07px;font-size:14.6px;">false</div>
<div class="abs" style="left:20px;top:365px;width:258px;height:1px;background:#c2c0bb;"></div>
<div class="abs" style="left:99px;top:346px;width:1px;height:20px;background:#c2c0bb;"></div>
<div class="t" style="left:23px;top:350.07px;font-size:14.6px;letter-spacing:0.42px;">Pattern</div>
<div class="t" style="left:103.3px;top:350.07px;font-size:14.6px;">None</div>
<div class="abs" style="left:0;top:366px;width:278px;height:20px;background:#efefef;"></div>
<div class="abs" style="left:20px;top:385px;width:258px;height:1px;background:#c2c0bb;"></div>
<div class="abs" style="left:99px;top:366px;width:1px;height:20px;background:#c2c0bb;"></div>
<div class="t" style="left:23px;top:370.07px;font-size:14.6px;letter-spacing:0.3px;">Pattern …</div>
<div class="t" style="left:103.3px;top:370.07px;font-size:14.6px;">1,00</div>
<div class="abs" style="left:0;top:386px;width:278px;height:20px;background:#c8c7c5;"></div>
<div class="t" style="left:23px;top:390.07px;font-size:14.6px;font-weight:bold;color:#fff;">Grid</div>
<div class="abs" style="left:0;top:406px;width:278px;height:20px;background:#efefef;"></div>
<div class="abs" style="left:20px;top:425px;width:258px;height:1px;background:#c2c0bb;"></div>
<div class="abs" style="left:99px;top:406px;width:1px;height:20px;background:#c2c0bb;"></div>
<div class="t" style="left:23px;top:410.07px;font-size:14.6px;letter-spacing:-0.27px;">Grid Size</div>
<div class="t" style="left:103.3px;top:410.07px;font-size:14.6px;">10 mm</div>
<div class="abs" style="left:20px;top:445px;width:258px;height:1px;background:#c2c0bb;"></div>
<div class="abs" style="left:99px;top:426px;width:1px;height:20px;background:#c2c0bb;"></div>
<div class="t" style="left:23px;top:430.07px;font-size:14.6px;letter-spacing:-0.24px;">Grid Snap</div>
<div class="t" style="left:103.3px;top:430.07px;font-size:14.6px;">false</div>
</div>
<div class="abs" style="left:287px;top:554px;width:13px;height:444px;border:1px solid #aaa7a0;border-radius:6.5px;box-sizing:border-box;background:#f1f0ee;"></div>
<div class="abs" style="left:288px;top:900px;width:11px;height:85px;border-radius:0 0 5.5px 5.5px;background:linear-gradient(to right,#d6d5d2,#dfdedc 40%,#e2e1df);border-bottom:1px solid #b5b2ac;box-sizing:border-box;"></div>
<div class="abs" style="left:287px;top:567px;width:13px;height:348px;border:1px solid #9e9b94;border-radius:7px;box-sizing:border-box;background:linear-gradient(to right,#fcfcfb,#f3f2f1 50%,#dddcda);"></div>
<svg style="left:290px;top:558px" width="8" height="6" viewBox="0 0 8 6"><polygon points="1.6,5 3.5,2.8 5.4,5" fill="#b5b2ad"/></svg>
<svg style="left:289.5px;top:987px" width="8" height="6" viewBox="0 0 8 6"><polygon points="1.2,2.2 6.4,2.2 3.8,5.2" fill="#6a6965"/></svg>
<div class="abs" style="left:291px;top:737px;width:5px;height:1px;background:#b0ada7;box-shadow:0 3px 0 #b0ada7,0 6px 0 #b0ada7;"></div>
<div class="abs" style="left:305px;top:555px;width:4px;height:1px;background:#cfccc7;box-shadow:0 3px 0 #cfccc7,0 6px 0 #cfccc7;"></div>
<svg style="left:0;top:998px" width="110" height="34" viewBox="0 998 110 34"><path d="M52.4,1001.3 L59.6,1022.5 Q61.3,1027.4 66,1027.4 L84,1027.4 Q88.7,1027.4 90.4,1022.5 L97.4,1001.3" fill="#efeeec" stroke="#4c4b47" stroke-width="0.9"/><path d="M2.3,999.7 L9.6,1024 Q11.2,1028.3 16,1028.3 L36.5,1028.3 Q41.3,1028.3 42.9,1024 L51.1,999.5" fill="#f8f7f6" stroke="#4c4b47" stroke-width="0.9"/></svg>
<div class="t" style="left:10.7px;top:1006.57px;font-size:14.6px;letter-spacing:0.3px;">View</div>
<div class="t" style="left:60.2px;top:1005.77px;font-size:14.6px;">Data</div>
<!-- viewport.html -->
<div class="abs" style="left:309px;top:84px;width:1545px;height:914px;background:#fdfdfb;"></div>
<div class="abs" id="vp" style="left:310px;top:85px;width:1544px;height:913px;background:linear-gradient(to bottom,#333366 0%,#9797ae 100%);overflow:hidden;">
<div class="abs" style="left:0;top:0;width:1544px;height:1px;background:#1e1e5a;"></div>
<div class="abs" style="left:0;top:0;width:1px;height:913px;background:linear-gradient(to bottom,#1e1e5a,#8585a0);"></div>
<svg width="1544" height="913" viewBox="310 85 1544 913" style="left:0;top:0;">
 <g fill="none" stroke="#000" stroke-width="1.8" stroke-linecap="butt">
  <line x1="662.7" y1="182.7" x2="593.6" y2="314"/>
  <line x1="922.7" y1="354.5" x2="922.7" y2="475.8"/>
  <line x1="610" y1="469.4" x2="812.8" y2="469.4"/>
  <line x1="765.3" y1="404.6" x2="910.3" y2="602.6"/>
  <line x1="1015" y1="605.3" x2="1208.9" y2="605.3"/>
  <line x1="1247.4" y1="608.5" x2="1338.5" y2="517.4"/>
  <line x1="1393.1" y1="511.8" x2="1393.1" y2="619.6"/>
 </g>
 <rect x="820" y="408" width="1.5" height="1.5" fill="#000"/>
 <g fill="none" stroke-width="3" stroke-linecap="round">
  <line x1="697.4" y1="266.5" x2="908.5" y2="173.6" stroke="#ffaa00"/>
  <line x1="776.2" y1="263.8" x2="800.4" y2="338.3" stroke="#ffaa00"/>
  <line x1="875" y1="236.3" x2="970.1" y2="311.3" stroke="#00aaff"/>
 </g>
 <polygon points="990.6,241.8 1093.4,174.7 1145.7,296.9" fill="#b4ffff" stroke="#12a8fb" stroke-width="3" stroke-linejoin="round"/>
 <polygon points="1229.9,230.7 1240.1,324.2 1150.3,338" fill="#ffff08" stroke="#ffa600" stroke-width="3" stroke-linejoin="round"/>
 <polyline fill="none" stroke="#000" stroke-width="1.6" points="984.5,836.5 1101,719.6 1224.9,719.6 1224.9,805.1 1297.7,805.1 1375.1,710.6 1241.1,653.6 1033.7,653.6 829.4,858.2 829.4,929.4 1024.6,929.4 1151.5,803.1"/>
 <g>
  <line x1="1809.4" y1="952" x2="1809.4" y2="930" stroke="#20881f" stroke-width="1.7"/>
  <polygon points="1809.4,921.2 1813,931.3 1805.8,931.3" fill="#20881f" stroke="#20881f" stroke-width="0.6" stroke-linejoin="round"/>
  <line x1="1810" y1="952.3" x2="1840.8" y2="952.3" stroke="#8a2020" stroke-width="1.7"/>
  <polygon points="1837,952.3 1830.4,949 1830.4,955.7" fill="#8a2020" stroke="#8a2020" stroke-width="0.6" stroke-linejoin="round"/>
  <polygon points="1809.4,947.8 1814,952.5 1809.4,957.2 1804.8,952.5" fill="#20208a"/>
  <g fill="none" stroke="#000" stroke-width="1.1" stroke-linecap="square">
   <path d="M1812.3,915.4 L1814.6,918.2 L1816.9,915.4 M1814.6,918.2 V921.6"/>
   <path d="M1812.4,946.9 H1816.8 L1812.4,952.5 H1816.8"/>
   <path d="M1843.3,946.9 L1847.8,952.6 M1847.8,946.9 L1843.3,952.6"/>
  </g>
 </g>
</svg>
</div>

<!-- bottom.html -->
<div class="abs" style="left:310px;top:998px;width:149px;height:30px;box-sizing:border-box;border:1px solid #c3c0ba;border-top:none;border-radius:0 0 4px 4px;background:linear-gradient(#dcdbd8,#e9e8e6 40%,#f0efed);"></div>
<div class="abs" style="left:458px;top:998px;width:195px;height:33px;box-sizing:border-box;border:1px solid #c3c0ba;border-top:none;border-radius:0 0 4px 4px;background:linear-gradient(#fafaf9,#f5f4f3);"></div>
<div class="abs" style="left:0;top:1031px;width:1854px;height:1px;background:#d6d4d0;"></div>
<div class="abs" style="left:0;top:1032px;width:1854px;height:1px;background:#f9f9f8;"></div>
<div class="t" style="left:340.9px;top:1006.97px;font-size:14.6px;word-spacing:-0.9px;">Unnamed : 1</div>
<div class="t" style="left:489.6px;top:1008.37px;font-size:14.6px;word-spacing:-0.5px;">F2-T23-ejemplo : 1*</div>
<svg style="left:0;top:998px" width="700" height="40" viewBox="0 998 700 40"><path d="M317.6,1006 h8.4 v3 h-4.6 v2.4 h3.4 v2.8 h-3.4 v4.4 h-3.8 Z" fill="#f01c08"/><path d="M317.6,1006 h2 v12.6 h-2 Z" fill="#f86a30"/><polygon points="332.0,1014.6 330.2,1016.0 330.5,1018.3 328.2,1018.0 326.8,1019.8 325.4,1018.0 323.1,1018.3 323.4,1016.0 321.6,1014.6 323.4,1013.2 323.1,1010.9 325.4,1011.2 326.8,1009.4 328.2,1011.2 330.5,1010.9 330.2,1013.2" fill="#1a3fa8" stroke="#0c2470" stroke-width="0.4"/><circle cx="326.8" cy="1014.6" r="1.7" fill="#f2f1f0"/><path d="M465.6,1007.2 h8.4 v3 h-4.6 v2.4 h3.4 v2.8 h-3.4 v4.4 h-3.8 Z" fill="#f01c08"/><path d="M465.6,1007.2 h2 v12.6 h-2 Z" fill="#f86a30"/><polygon points="480.0,1015.8 478.2,1017.2 478.5,1019.5 476.2,1019.2 474.8,1021.0 473.4,1019.2 471.1,1019.5 471.4,1017.2 469.6,1015.8 471.4,1014.4 471.1,1012.1 473.4,1012.4 474.8,1010.6 476.2,1012.4 478.5,1012.1 478.2,1014.4" fill="#1a3fa8" stroke="#0c2470" stroke-width="0.4"/><circle cx="474.8" cy="1015.8" r="1.7" fill="#f2f1f0"/><path d="M436.5,1010.5 L443.9,1017.9 M443.9,1010.5 L436.5,1017.9" stroke="#5c5b57" stroke-width="3.5" stroke-linecap="round"/><path d="M631.2,1011.5 L638.6,1018.9 M638.6,1011.5 L631.2,1018.9" stroke="#5c5b57" stroke-width="3.5" stroke-linecap="round"/></svg>
<div class="t" style="right:0.8px;top:1039.77px;font-size:14.6px;letter-spacing:-0.12px;">173.85 x 102.73 mm</div>
<div class="abs" id="botline"></div>
</body></html>
